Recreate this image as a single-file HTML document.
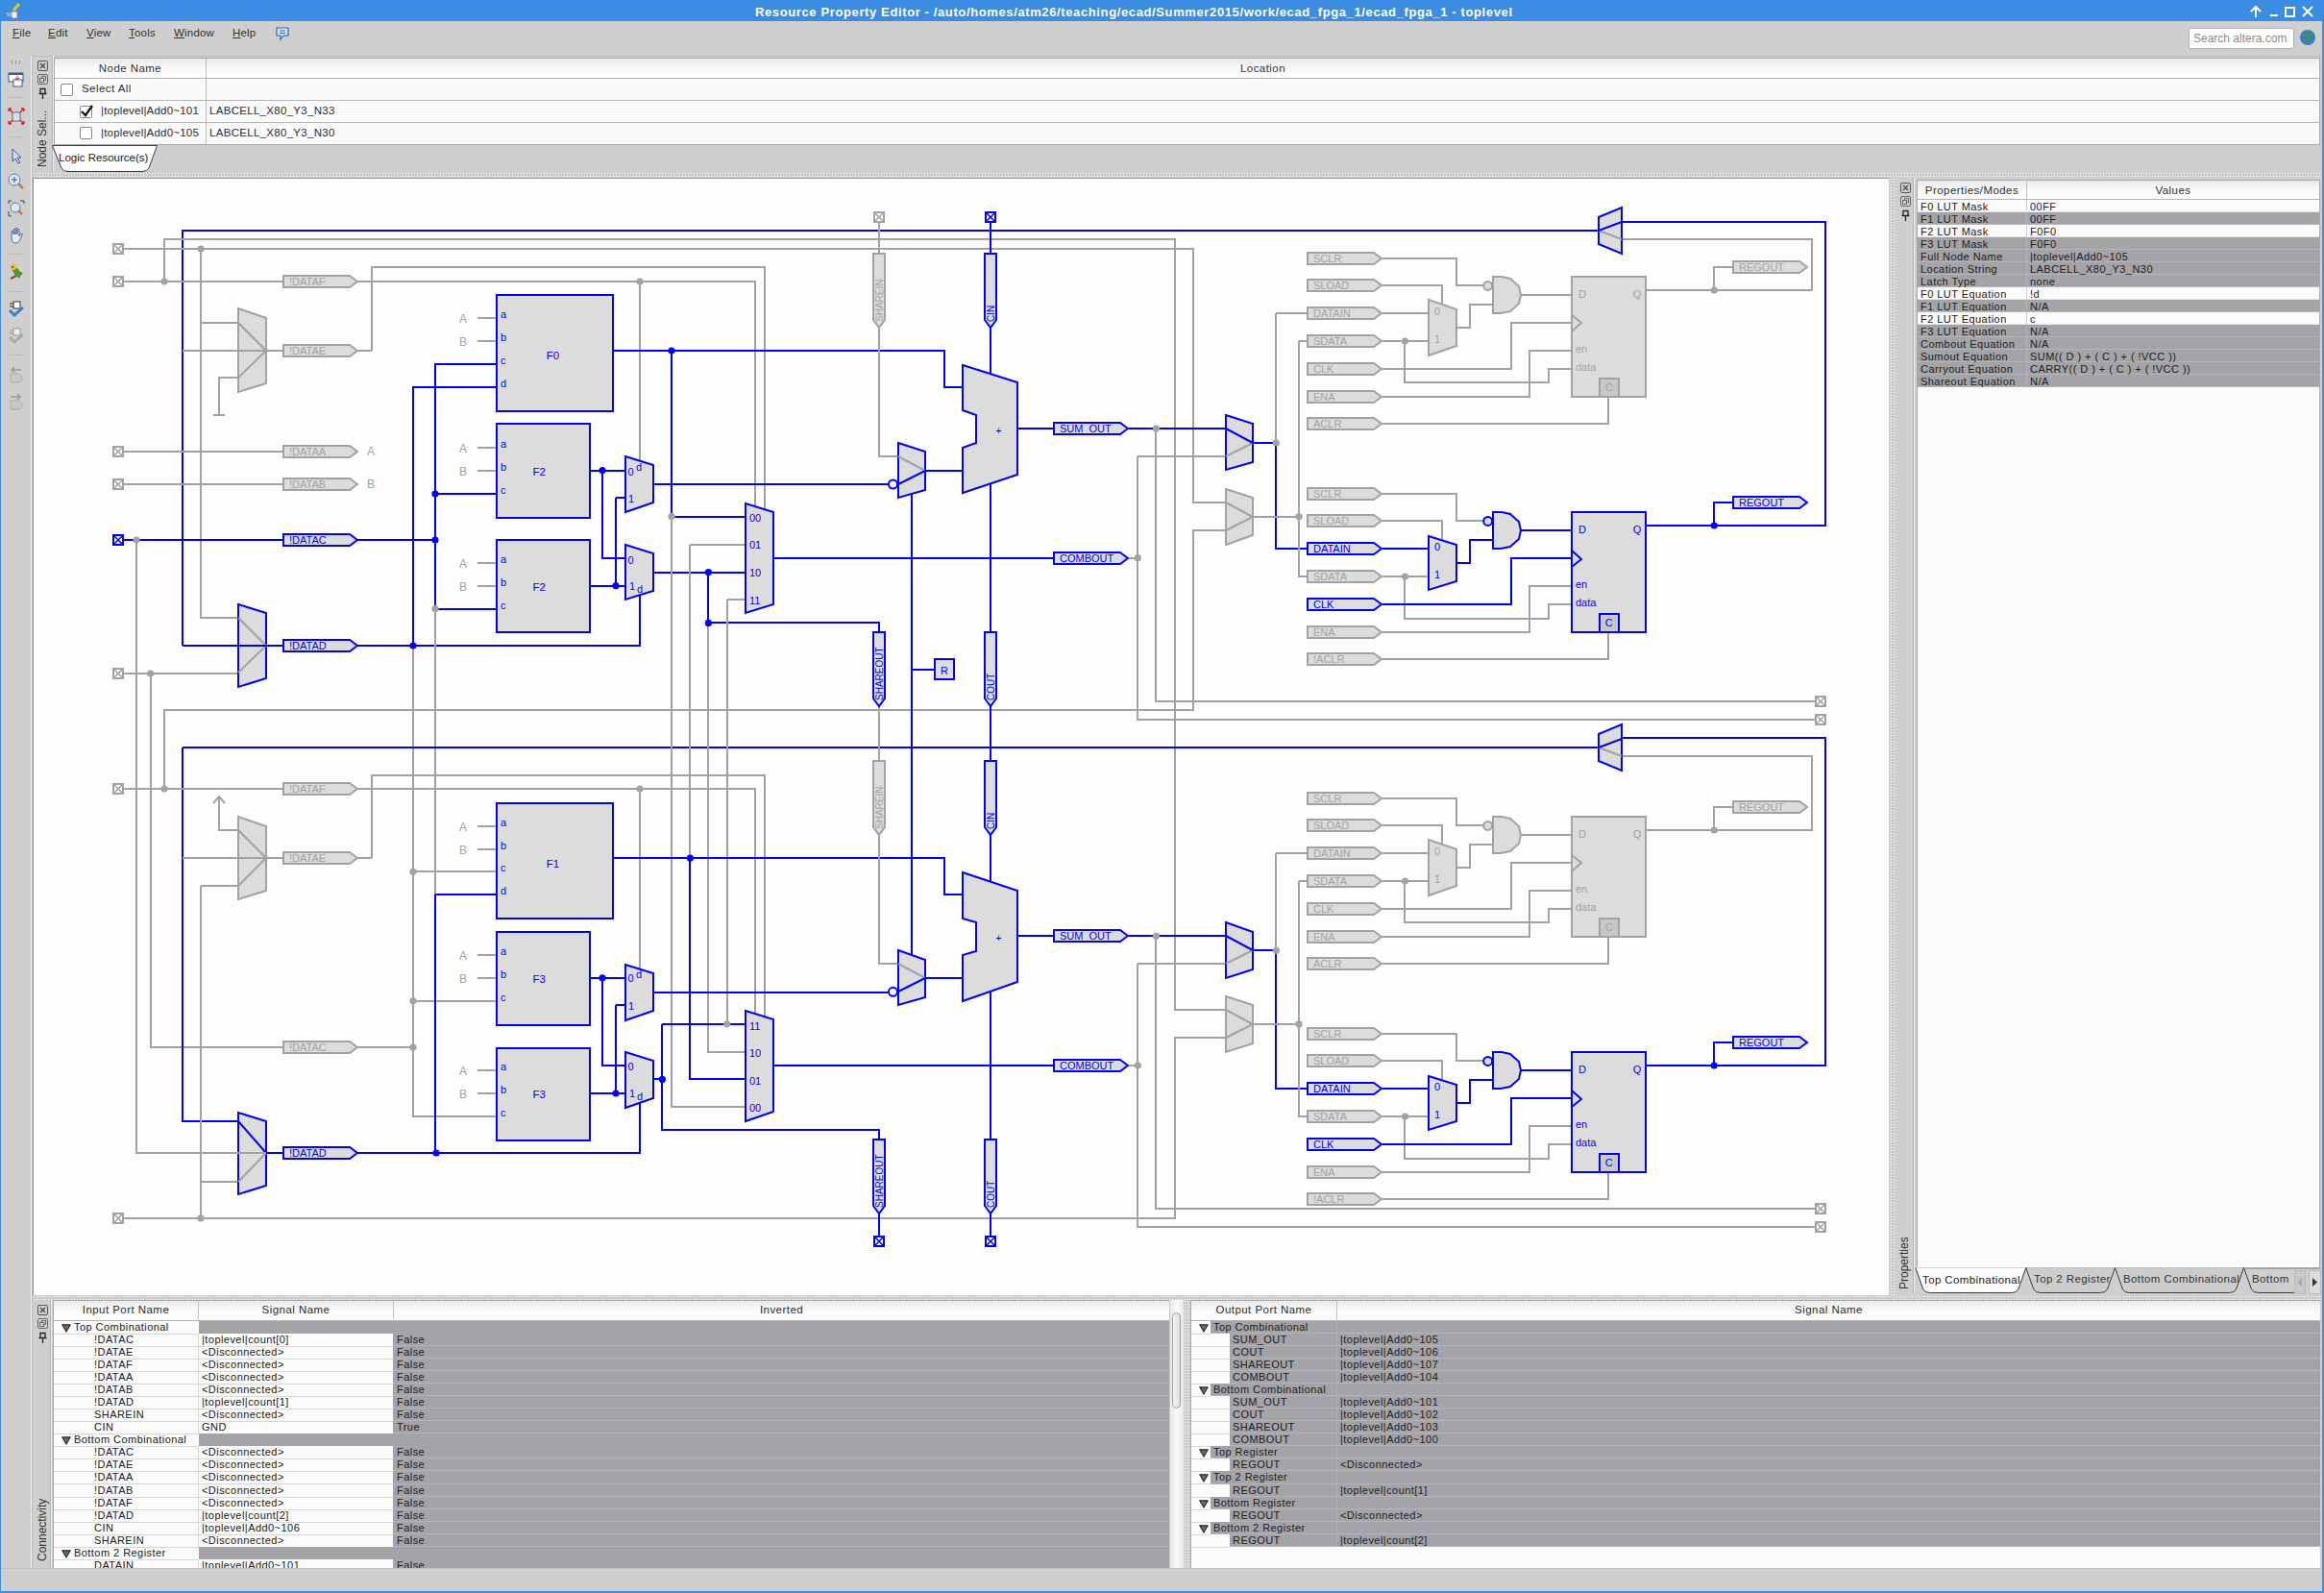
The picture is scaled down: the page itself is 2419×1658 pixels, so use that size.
<!DOCTYPE html><html><head><meta charset="utf-8"><style>
*{margin:0;padding:0;box-sizing:border-box}
html,body{width:2419px;height:1658px;overflow:hidden;background:#cfcfcf;font-family:"Liberation Sans",sans-serif;color:#2e2e2e}
.a{position:absolute}
svg text{font-family:"Liberation Sans",sans-serif;stroke:none}
svg .t{font-size:11px}
svg .tl{font-size:12px}
svg .tp{font-size:11px}
svg .tf{font-size:11.5px}
svg .tv{font-size:10px}
.menu span{position:absolute;top:28px;font-size:11.5px;color:#303030;letter-spacing:0.2px}
.hdr{background:linear-gradient(#e9e9e9,#f8f8f8 45%,#ffffff);}
.cell{position:absolute;font-size:11px;white-space:nowrap;overflow:hidden;letter-spacing:0.45px}
.vl{position:absolute;width:1px;background:#b8b8b8}
.hl{position:absolute;height:1px;background:#c0c0c0}
.gr{background:#a3a3a8}
.dots{background-color:#cdcdcd;background-image:radial-gradient(circle,#ffffff 0.7px,transparent 1px);background-size:3px 3px}
</style></head><body>
<div class="a" style="left:0;top:0;width:2419px;height:1658px;border:1px solid #3d8ee4;border-width:0 2px 2px 1px"></div>
<div class="a" style="left:0;top:0;width:2419px;height:22px;background:#3b8de3"></div>
<div class="a" style="left:786px;top:5px;width:800px;font-size:13px;font-weight:bold;color:#fff;white-space:nowrap;letter-spacing:0.62px">Resource Property Editor - /auto/homes/atm26/teaching/ecad/Summer2015/work/ecad_fpga_1/ecad_fpga_1 - toplevel</div>
<svg class="a" style="left:2340px;top:4px" width="75" height="16" viewBox="0 0 75 16"><g stroke="#fff" stroke-width="2" fill="none"><path d="M8,14V3M3,8L8,3L13,8"/><path d="M23,12H31"/><rect x="39" y="4" width="9" height="9"/><path d="M57,3L67,13M67,3L57,13"/></g></svg>
<svg class="a" style="left:4px;top:2px" width="18" height="18"><rect x="8" y="10" width="6" height="7" fill="#eee" stroke="#888"/><path d="M10,9L16,2" stroke="#f0c020" stroke-width="3"/><path d="M2,12H8M3,14H8" stroke="#ccc"/></svg>
<div class="menu">
<span style="left:13px"><u>F</u>ile</span>
<span style="left:50px"><u>E</u>dit</span>
<span style="left:90px"><u>V</u>iew</span>
<span style="left:134px"><u>T</u>ools</span>
<span style="left:181px"><u>W</u>indow</span>
<span style="left:242px"><u>H</u>elp</span>
</div>
<svg class="a" style="left:286px;top:27px" width="16" height="16"><path d="M2,2H14V10H9L6,14V10H2Z" fill="#dbe6f5" stroke="#3060b0" stroke-width="1.2"/><path d="M5,5H11M5,7.5H11" stroke="#3060b0"/></svg>
<div class="a" style="left:2278px;top:29px;width:110px;height:22px;background:#fff;border:1px solid #b0b0b0;border-radius:2px;font-size:12px;color:#8a8a8a;padding:3px 0 0 4px;white-space:nowrap">Search altera.com</div>
<svg class="a" style="left:2393px;top:30px" width="18" height="18"><circle cx="9" cy="9" r="8" fill="#3a7ad8"/><path d="M5,4Q9,6 8,10Q6,12 9,15M11,3Q14,6 12,9" stroke="#3c9a3c" stroke-width="3" fill="none"/></svg>
<div class="a" style="left:33px;top:58px;width:2384px;height:1px;background:#bababa"></div>
<div class="a" style="left:12px;top:63px;width:9px;height:4px;border-left:1px solid #999;border-right:1px solid #999"><div style="margin-left:3px;width:1px;height:4px;background:#999"></div></div>
<svg class="a" style="left:8px;top:74px" width="18" height="18"><rect x="1" y="2" width="15" height="9" fill="#fff" stroke="#3a5aa0"/><rect x="1" y="2" width="15" height="2" fill="#3a5aa0"/><rect x="6" y="9" width="9" height="7" fill="#fff" stroke="#3a5aa0"/><path d="M10,5V9M8,7L10,9L12,7" stroke="#d02020" fill="none"/></svg>
<div class="a" style="left:9px;top:101px;width:16px;height:1px;background:#bcbcbc"></div>
<svg class="a" style="left:8px;top:112px" width="18" height="18"><rect x="5" y="5" width="8" height="9" fill="#dde" stroke="#667"/><path d="M1,1L5,5M17,1L13,5M1,17L5,13M17,17L13,13M1,1H4M1,1V4M17,1H14M17,1V4M1,17H4M1,17V14M17,17H14M17,17V14" stroke="#e02020" stroke-width="1.3" fill="none"/></svg>
<div class="a" style="left:9px;top:142px;width:16px;height:1px;background:#bcbcbc"></div>
<svg class="a" style="left:8px;top:153px" width="18" height="18"><path d="M5,2L5,15L8,12L11,17L13,16L10,11L14,11Z" fill="#cfe0f5" stroke="#3a5a90"/></svg>
<svg class="a" style="left:8px;top:180px" width="18" height="18"><circle cx="7" cy="7" r="6" fill="#dfe9f7" stroke="#5a7ab0"/><path d="M4,7H10M7,4V10" stroke="#3050a0"/><path d="M11,11L16,16" stroke="#c08040" stroke-width="2.5"/></svg>
<svg class="a" style="left:8px;top:208px" width="18" height="18"><circle cx="8" cy="8" r="5" fill="#dfe9f7" stroke="#5a7ab0"/><path d="M11,11L15,15" stroke="#c08040" stroke-width="2.5"/><path d="M1,12V17H4M17,4V1H13M1,4V1H4" stroke="#304060" fill="none"/></svg>
<svg class="a" style="left:8px;top:236px" width="18" height="18"><path d="M4,9V5Q5,3 6,5V8V3Q7,1 8,3V8V2Q9,0 10,2V8V3Q11,1 12,3V10L14,7Q16,7 15,9L12,15Q11,17 8,17H7Q4,16 4,12Z" fill="#e8eef8" stroke="#4a68a8"/></svg>
<div class="a" style="left:9px;top:264px;width:16px;height:1px;background:#bcbcbc"></div>
<svg class="a" style="left:8px;top:274px" width="18" height="18"><path d="M3,16L15,10" stroke="#805030" stroke-width="2"/><path d="M6,4Q12,4 14,12L12,16Q7,12 5,8Z" fill="#4a9a30"/><circle cx="6" cy="4" r="3" fill="#f0c020"/><circle cx="5" cy="4" r="1" fill="#d02020"/></svg>
<div class="a" style="left:9px;top:303px;width:16px;height:1px;background:#bcbcbc"></div>
<svg class="a" style="left:8px;top:312px" width="18" height="18"><rect x="6" y="2" width="7" height="7" fill="#fff" stroke="#333"/><path d="M2,4H6M2,7H6" stroke="#333"/><path d="M2,11L7,16L16,8" stroke="#3a7ad8" stroke-width="3" fill="none"/></svg>
<svg class="a" style="left:8px;top:340px" width="18" height="18"><rect x="6" y="2" width="7" height="7" fill="#eee" stroke="#999"/><path d="M2,4H6M2,7H6" stroke="#999"/><path d="M2,11L7,16L16,8" stroke="#aaa" stroke-width="3" fill="none"/></svg>
<div class="a" style="left:9px;top:369px;width:16px;height:1px;background:#bcbcbc"></div>
<svg class="a" style="left:8px;top:381px" width="18" height="18"><path d="M3,8H9Q15,8 15,13Q15,17 9,17H3Z" fill="#c8c8c8" stroke="#aaa"/><path d="M14,4H4M7,1L4,4L7,7" stroke="#999" stroke-width="1.5" fill="none"/></svg>
<svg class="a" style="left:8px;top:409px" width="18" height="18"><path d="M3,8H9Q15,8 15,13Q15,17 9,17H3Z" fill="#c8c8c8" stroke="#aaa"/><path d="M3,4H13M10,1L13,4L10,7" stroke="#999" stroke-width="1.5" fill="none"/></svg>
<div class="a" style="left:32px;top:58px;width:2px;height:1574px;background:#bcbcbc;border-left:1px solid #f4f4f4"></div>
<svg class="a" style="left:38px;top:62px" width="13" height="44"><g fill="none" stroke="#555"><rect x="1.5" y="1.5" width="10" height="10" rx="1.5"/><path d="M4,4L9,9M9,4L4,9" stroke-width="1.6"/><rect x="1.5" y="15.5" width="10" height="10" rx="1.5" stroke="#6a6a6a"/><rect x="3.5" y="19.5" width="4" height="4" stroke="#6a6a6a"/><path d="M5.5,19.5V17.5H9.5V21.5H7.5" stroke="#6a6a6a"/><path d="M4,30.5H9V35.5H4ZM6.5,35.5V41M2.5,35.5H10.5" stroke="#222" stroke-width="1.3"/></g></svg>
<div class="a" style="left:35px;top:114px;width:18px;height:60px;"><div style="position:absolute;left:0;top:60px;transform:rotate(-90deg);transform-origin:0 0;font-size:12px;white-space:nowrap;color:#333;width:60px;line-height:18px">Node Sel...</div></div>
<div class="a" style="left:54px;top:58px;width:2px;height:122px;background:#b4b4b4;border-right:1px solid #eee"></div>
<div class="a" style="left:56px;top:60px;width:2359px;height:91px;background:#fafafa;border:1px solid #a8a8a8"></div>
<div class="a hdr" style="left:57px;top:61px;width:2357px;height:21px;border-bottom:1px solid #b4b4b4"></div>
<div class="cell" style="left:57px;top:65px;width:157px;text-align:center;font-size:11.5px;color:#333">Node Name</div>
<div class="cell" style="left:215px;top:65px;width:2199px;text-align:center;font-size:11.5px;color:#333">Location</div>
<div class="vl" style="left:214px;top:61px;height:89px;background:#b8b8b8"></div>
<div class="hl" style="left:57px;top:104px;width:2357px;background:#b8b8b8"></div>
<div class="hl" style="left:57px;top:127px;width:2357px;background:#b8b8b8"></div>
<div class="a" style="left:63px;top:87px;width:13px;height:13px;background:#fff;border:1px solid #888;border-radius:2px"></div>
<div class="a" style="left:83px;top:110px;width:13px;height:13px;background:#fff;border:1px solid #888;border-radius:2px"></div>
<svg class="a" style="left:83px;top:108px" width="15" height="15"><path d="M2,8L6,12L13,2" stroke="#111" stroke-width="2.2" fill="none"/></svg>
<div class="a" style="left:83px;top:132px;width:13px;height:13px;background:#fff;border:1px solid #888;border-radius:2px"></div>
<div class="cell" style="left:85px;top:86px;font-size:11.5px">Select All</div>
<div class="cell" style="left:105px;top:109px;font-size:11.5px;letter-spacing:0.2px">|toplevel|Add0~101</div>
<div class="cell" style="left:105px;top:132px;font-size:11.5px;letter-spacing:0.2px">|toplevel|Add0~105</div>
<div class="cell" style="left:218px;top:109px;font-size:11.5px;letter-spacing:0.3px">LABCELL_X80_Y3_N33</div>
<div class="cell" style="left:218px;top:132px;font-size:11.5px;letter-spacing:0.3px">LABCELL_X80_Y3_N30</div>
<svg class="a" style="left:54px;top:151px" width="115" height="30"><path d="M0.5,0.5H109.5L101,24Q99,27.5 94,27.5H16Q12,27.5 10,24Z" fill="#fbfbfb" stroke="#404040" stroke-width="1"/></svg>
<div class="cell" style="left:61px;top:158px;font-size:11.5px;color:#222;letter-spacing:0">Logic Resource(s)</div>
<div class="a dots" style="left:34px;top:179px;width:2383px;height:5px"></div>
<div class="a" style="left:34px;top:185px;width:1932px;height:1163px;background:#fefefe;border-left:1px solid #9a9a9a;border-top:1px solid #9a9a9a"></div>
<svg width="2419" height="1658" viewBox="0 0 2419 1658" style="position:absolute;left:0;top:0" stroke-width="2">
<polyline points="190,672 190,240 1664,240" stroke="#0000ff" fill="none"/>
<polyline points="171,293 171,249 1223,249 1223,1051 1275,1051" stroke="#a2a2a2" fill="none"/>
<polyline points="123,259 1242,259 1242,523 1275,523" stroke="#a2a2a2" fill="none"/>
<polyline points="209,259 209,643 248,643" stroke="#a2a2a2" fill="none"/>
<polyline points="209,336 248,336" stroke="#a2a2a2" fill="none"/>
<polyline points="123,293 296,293" stroke="#a2a2a2" fill="none"/>
<polyline points="372,293 786,293 786,527" stroke="#a2a2a2" fill="none"/>
<polyline points="666,293 666,479" stroke="#a2a2a2" fill="none"/>
<polyline points="387,365 387,278 796,278 796,530" stroke="#a2a2a2" fill="none"/>
<polyline points="190,365 296,365" stroke="#a2a2a2" fill="none"/>
<polyline points="248,393 228,393 228,432" stroke="#a2a2a2" fill="none"/>
<polyline points="222,432 234,432" stroke="#a2a2a2" fill="none"/>
<polygon points="248,321 277,331 277,399 248,408" fill="#dcdcdc" stroke="#a2a2a2"/>
<polyline points="248,336 277,365 248,393" stroke="#a2a2a2" fill="none"/>
<polyline points="190,365 296,365" stroke="#a2a2a2" fill="none"/>
<polyline points="372,365 387,365" stroke="#a2a2a2" fill="none"/>
<polyline points="123,470 296,470" stroke="#a2a2a2" fill="none"/>
<polyline points="123,504 296,504" stroke="#a2a2a2" fill="none"/>
<polyline points="123,562 296,562" stroke="#0000ff" fill="none"/>
<polyline points="372,562 453,562" stroke="#0000ff" fill="none"/>
<polyline points="142,562 142,1200 248,1200" stroke="#a2a2a2" fill="none"/>
<polyline points="209,643 248,643" stroke="#a2a2a2" fill="none"/>
<polyline points="123,701 248,701" stroke="#a2a2a2" fill="none"/>
<polyline points="157,701 157,1090 296,1090" stroke="#a2a2a2" fill="none"/>
<polygon points="248,629 277,638 277,706 248,715" fill="#dcdcdc" stroke="#0000ff"/>
<polyline points="248,643 277,672 248,700" stroke="#a2a2a2" fill="none"/>
<polyline points="190,672 296,672" stroke="#0000ff" fill="none"/>
<polyline points="372,672 640,672 666,672 666,620" stroke="#0000ff" fill="none"/>
<polyline points="516,379 453,379 453,634 516,634" stroke="#0000ff" fill="none"/>
<polyline points="453,514 516,514" stroke="#0000ff" fill="none"/>
<polyline points="516,403 430,403 430,672" stroke="#0000ff" fill="none"/>
<polyline points="453,634 453,931" stroke="#a2a2a2" fill="none"/>
<polyline points="453,931 516,931" stroke="#0000ff" fill="none"/>
<polyline points="430,672 430,1162 516,1162" stroke="#a2a2a2" fill="none"/>
<polyline points="430,907 516,907" stroke="#a2a2a2" fill="none"/>
<polyline points="430,1042 516,1042" stroke="#a2a2a2" fill="none"/>
<polyline points="372,1090 430,1090" stroke="#a2a2a2" fill="none"/>
<polyline points="453,931 453,1200" stroke="#0000ff" fill="none"/>
<polyline points="190,778 1664,778" stroke="#0000ff" fill="none"/>
<polyline points="190,778 190,1167 248,1167" stroke="#0000ff" fill="none"/>
<polyline points="171,821 171,739 1242,739 1242,552 1275,552" stroke="#a2a2a2" fill="none"/>
<polyline points="123,821 296,821" stroke="#a2a2a2" fill="none"/>
<polyline points="372,821 786,821 786,1055" stroke="#a2a2a2" fill="none"/>
<polyline points="666,821 666,1008" stroke="#a2a2a2" fill="none"/>
<polyline points="387,893 387,807 796,807 796,1058" stroke="#a2a2a2" fill="none"/>
<polyline points="190,893 296,893" stroke="#a2a2a2" fill="none"/>
<polyline points="372,893 387,893" stroke="#a2a2a2" fill="none"/>
<polyline points="228,829 228,864 248,864" stroke="#a2a2a2" fill="none"/>
<polyline points="222,836 228,829 234,836" stroke="#a2a2a2" fill="none"/>
<polygon points="248,850 277,860 277,927 248,936" fill="#dcdcdc" stroke="#a2a2a2"/>
<polyline points="248,864 277,893 248,922" stroke="#a2a2a2" fill="none"/>
<polyline points="190,893 296,893" stroke="#a2a2a2" fill="none"/>
<polyline points="209,922 248,922" stroke="#a2a2a2" fill="none"/>
<polyline points="209,922 209,1268" stroke="#a2a2a2" fill="none"/>
<polyline points="209,1230 248,1230" stroke="#a2a2a2" fill="none"/>
<polyline points="123,1268 1223,1268 1223,1080 1275,1080" stroke="#a2a2a2" fill="none"/>
<polygon points="248,1158 277,1167 277,1234 248,1243" fill="#dcdcdc" stroke="#0000ff"/>
<polyline points="248,1167 277,1200" stroke="#0000ff" fill="none"/>
<polyline points="248,1230 277,1200" stroke="#a2a2a2" fill="none"/>
<polyline points="142,1200 277,1200" stroke="#a2a2a2" fill="none"/>
<polyline points="277,1200 296,1200" stroke="#0000ff" fill="none"/>
<polyline points="372,1200 666,1200 666,1148" stroke="#0000ff" fill="none"/>
<g stroke="#a2a2a2" fill="#fff"><rect x="118" y="254" width="10" height="10"/><path d="M118,254L128,264M128,254L118,264" stroke-width="1.5"/></g>
<g stroke="#a2a2a2" fill="#fff"><rect x="118" y="288" width="10" height="10"/><path d="M118,288L128,298M128,288L118,298" stroke-width="1.5"/></g>
<g stroke="#a2a2a2" fill="#fff"><rect x="118" y="465" width="10" height="10"/><path d="M118,465L128,475M128,465L118,475" stroke-width="1.5"/></g>
<g stroke="#a2a2a2" fill="#fff"><rect x="118" y="499" width="10" height="10"/><path d="M118,499L128,509M128,499L118,509" stroke-width="1.5"/></g>
<g stroke="#a2a2a2" fill="#fff"><rect x="118" y="696" width="10" height="10"/><path d="M118,696L128,706M128,696L118,706" stroke-width="1.5"/></g>
<g stroke="#a2a2a2" fill="#fff"><rect x="118" y="816" width="10" height="10"/><path d="M118,816L128,826M128,816L118,826" stroke-width="1.5"/></g>
<g stroke="#a2a2a2" fill="#fff"><rect x="118" y="1263" width="10" height="10"/><path d="M118,1263L128,1273M128,1263L118,1273" stroke-width="1.5"/></g>
<g stroke="#0000ff" fill="#fff"><rect x="118" y="557" width="10" height="10"/><path d="M118,557L128,567M128,557L118,567" stroke-width="1.5"/></g>
<polygon points="295,287 364,287 372,293 364,299 295,299" fill="#dcdcdc" stroke="#a2a2a2"/>
<text x="301" y="297.3" fill="#a2a2a2" class="t">!DATAF</text>
<polygon points="295,359 364,359 372,365 364,371 295,371" fill="#dcdcdc" stroke="#a2a2a2"/>
<text x="301" y="369.3" fill="#a2a2a2" class="t">!DATAE</text>
<polygon points="295,464 364,464 372,470 364,476 295,476" fill="#dcdcdc" stroke="#a2a2a2"/>
<text x="301" y="474.3" fill="#a2a2a2" class="t">!DATAA</text>
<polygon points="295,498 364,498 372,504 364,510 295,510" fill="#dcdcdc" stroke="#a2a2a2"/>
<text x="301" y="508.3" fill="#a2a2a2" class="t">!DATAB</text>
<polygon points="295,556 364,556 372,562 364,568 295,568" fill="#dcdcdc" stroke="#0000ff"/>
<text x="301" y="566.3" fill="#0000ff" class="t">!DATAC</text>
<polygon points="295,666 364,666 372,672 364,678 295,678" fill="#dcdcdc" stroke="#0000ff"/>
<text x="301" y="676.3" fill="#0000ff" class="t">!DATAD</text>
<polygon points="295,815 364,815 372,821 364,827 295,827" fill="#dcdcdc" stroke="#a2a2a2"/>
<text x="301" y="825.3" fill="#a2a2a2" class="t">!DATAF</text>
<polygon points="295,887 364,887 372,893 364,899 295,899" fill="#dcdcdc" stroke="#a2a2a2"/>
<text x="301" y="897.3" fill="#a2a2a2" class="t">!DATAE</text>
<polygon points="295,1084 364,1084 372,1090 364,1096 295,1096" fill="#dcdcdc" stroke="#a2a2a2"/>
<text x="301" y="1094.3" fill="#a2a2a2" class="t">!DATAC</text>
<polygon points="295,1194 364,1194 372,1200 364,1206 295,1206" fill="#dcdcdc" stroke="#0000ff"/>
<text x="301" y="1204.3" fill="#0000ff" class="t">!DATAD</text>
<text x="382" y="474" fill="#a2a2a2" class="tl">A</text>
<text x="382" y="508" fill="#a2a2a2" class="tl">B</text>
<rect x="517" y="307" width="121" height="121" fill="#dcdcdc" stroke="#0000ff"/>
<text x="521" y="331" fill="#0000ff" class="tp">a</text>
<text x="521" y="355" fill="#0000ff" class="tp">b</text>
<text x="521" y="379" fill="#0000ff" class="tp">c</text>
<text x="521" y="403" fill="#0000ff" class="tp">d</text>
<text x="575.5" y="374.0" fill="#0000ff" class="tf" text-anchor="middle">F0</text>
<polyline points="497,331 516,331" stroke="#a2a2a2" fill="none"/>
<text x="482" y="336" fill="#a2a2a2" class="tl" text-anchor="middle">A</text>
<polyline points="497,355 516,355" stroke="#a2a2a2" fill="none"/>
<text x="482" y="360" fill="#a2a2a2" class="tl" text-anchor="middle">B</text>
<rect x="517" y="441" width="97" height="98" fill="#dcdcdc" stroke="#0000ff"/>
<text x="521" y="465.6" fill="#0000ff" class="tp">a</text>
<text x="521" y="489.7" fill="#0000ff" class="tp">b</text>
<text x="521" y="514" fill="#0000ff" class="tp">c</text>
<text x="561.0999999999999" y="494.5" fill="#0000ff" class="tf" text-anchor="middle">F2</text>
<polyline points="497,466 516,466" stroke="#a2a2a2" fill="none"/>
<text x="482" y="470.6" fill="#a2a2a2" class="tl" text-anchor="middle">A</text>
<polyline points="497,490 516,490" stroke="#a2a2a2" fill="none"/>
<text x="482" y="494.7" fill="#a2a2a2" class="tl" text-anchor="middle">B</text>
<rect x="517" y="562" width="97" height="96" fill="#dcdcdc" stroke="#0000ff"/>
<text x="521" y="586" fill="#0000ff" class="tp">a</text>
<text x="521" y="610" fill="#0000ff" class="tp">b</text>
<text x="521" y="633.5" fill="#0000ff" class="tp">c</text>
<text x="561.0999999999999" y="614.7" fill="#0000ff" class="tf" text-anchor="middle">F2</text>
<polyline points="497,586 516,586" stroke="#a2a2a2" fill="none"/>
<text x="482" y="591" fill="#a2a2a2" class="tl" text-anchor="middle">A</text>
<polyline points="497,610 516,610" stroke="#a2a2a2" fill="none"/>
<text x="482" y="615" fill="#a2a2a2" class="tl" text-anchor="middle">B</text>
<rect x="517" y="836" width="121" height="120" fill="#dcdcdc" stroke="#0000ff"/>
<text x="521" y="859.7" fill="#0000ff" class="tp">a</text>
<text x="521" y="883.5" fill="#0000ff" class="tp">b</text>
<text x="521" y="907.3" fill="#0000ff" class="tp">c</text>
<text x="521" y="931.2" fill="#0000ff" class="tp">d</text>
<text x="575.5" y="902.7" fill="#0000ff" class="tf" text-anchor="middle">F1</text>
<polyline points="497,860 516,860" stroke="#a2a2a2" fill="none"/>
<text x="482" y="864.7" fill="#a2a2a2" class="tl" text-anchor="middle">A</text>
<polyline points="497,884 516,884" stroke="#a2a2a2" fill="none"/>
<text x="482" y="888.5" fill="#a2a2a2" class="tl" text-anchor="middle">B</text>
<rect x="517" y="970" width="97" height="97" fill="#dcdcdc" stroke="#0000ff"/>
<text x="521" y="993.7" fill="#0000ff" class="tp">a</text>
<text x="521" y="1017.8" fill="#0000ff" class="tp">b</text>
<text x="521" y="1041.8" fill="#0000ff" class="tp">c</text>
<text x="561.0999999999999" y="1022.9" fill="#0000ff" class="tf" text-anchor="middle">F3</text>
<polyline points="497,994 516,994" stroke="#a2a2a2" fill="none"/>
<text x="482" y="998.7" fill="#a2a2a2" class="tl" text-anchor="middle">A</text>
<polyline points="497,1018 516,1018" stroke="#a2a2a2" fill="none"/>
<text x="482" y="1022.8" fill="#a2a2a2" class="tl" text-anchor="middle">B</text>
<rect x="517" y="1091" width="97" height="96" fill="#dcdcdc" stroke="#0000ff"/>
<text x="521" y="1114" fill="#0000ff" class="tp">a</text>
<text x="521" y="1138" fill="#0000ff" class="tp">b</text>
<text x="521" y="1161.7" fill="#0000ff" class="tp">c</text>
<text x="561.0999999999999" y="1143.25" fill="#0000ff" class="tf" text-anchor="middle">F3</text>
<polyline points="497,1114 516,1114" stroke="#a2a2a2" fill="none"/>
<text x="482" y="1119" fill="#a2a2a2" class="tl" text-anchor="middle">A</text>
<polyline points="497,1138 516,1138" stroke="#a2a2a2" fill="none"/>
<text x="482" y="1143" fill="#a2a2a2" class="tl" text-anchor="middle">B</text>
<polyline points="614,490 651,490" stroke="#0000ff" fill="none"/>
<polyline points="627,490 627,581 651,581" stroke="#0000ff" fill="none"/>
<polyline points="641,518 651,518" stroke="#0000ff" fill="none"/>
<polyline points="641,518 641,610" stroke="#0000ff" fill="none"/>
<polyline points="614,610 651,610" stroke="#0000ff" fill="none"/>
<polygon points="651,475 680,484 680,523 651,533" fill="#dcdcdc" stroke="#0000ff"/>
<polygon points="651,567 680,576 680,615 651,624" fill="#dcdcdc" stroke="#0000ff"/>
<text x="653.5" y="495" fill="#0000ff" class="tp">0</text>
<text x="662" y="490" fill="#0000ff" class="tp">d</text>
<text x="654" y="523" fill="#0000ff" class="tp">1</text>
<text x="653.5" y="587" fill="#0000ff" class="tp">0</text>
<text x="655" y="614" fill="#0000ff" class="tp">1</text>
<text x="663" y="617" fill="#0000ff" class="tp">d</text>
<polyline points="680,504 925,504" stroke="#0000ff" fill="none"/>
<polyline points="680,596 776,596" stroke="#0000ff" fill="none"/>
<polyline points="737,596 737,648 915,648 915,658" stroke="#0000ff" fill="none"/>
<polyline points="737,648 737,1095 776,1095" stroke="#a2a2a2" fill="none"/>
<polyline points="638,365 983,365 983,403 1002,403" stroke="#0000ff" fill="none"/>
<polyline points="699,365 699,538 776,538" stroke="#0000ff" fill="none"/>
<polyline points="699,538 699,1152 776,1152" stroke="#a2a2a2" fill="none"/>
<polyline points="718,567 776,567" stroke="#a2a2a2" fill="none"/>
<polyline points="718,567 718,893" stroke="#a2a2a2" fill="none"/>
<polyline points="757,624 776,624" stroke="#a2a2a2" fill="none"/>
<polyline points="757,624 757,1066" stroke="#a2a2a2" fill="none"/>
<polyline points="614,1018 651,1018" stroke="#0000ff" fill="none"/>
<polyline points="627,1018 627,1109 651,1109" stroke="#0000ff" fill="none"/>
<polyline points="641,1046 651,1046" stroke="#0000ff" fill="none"/>
<polyline points="641,1046 641,1138" stroke="#0000ff" fill="none"/>
<polyline points="614,1138 651,1138" stroke="#0000ff" fill="none"/>
<polygon points="651,1004 680,1013 680,1052 651,1062" fill="#dcdcdc" stroke="#0000ff"/>
<polygon points="651,1095 680,1104 680,1143 651,1153" fill="#dcdcdc" stroke="#0000ff"/>
<text x="653.5" y="1022" fill="#0000ff" class="tp">0</text>
<text x="662" y="1018" fill="#0000ff" class="tp">d</text>
<text x="654" y="1051" fill="#0000ff" class="tp">1</text>
<text x="653.5" y="1114" fill="#0000ff" class="tp">0</text>
<text x="655" y="1142" fill="#0000ff" class="tp">1</text>
<text x="663" y="1145" fill="#0000ff" class="tp">d</text>
<polyline points="680,1033 925,1033" stroke="#0000ff" fill="none"/>
<polyline points="680,1123 689,1123" stroke="#0000ff" fill="none"/>
<polyline points="689,1066 689,1176 915,1176 915,1186" stroke="#0000ff" fill="none"/>
<polyline points="689,1066 776,1066" stroke="#0000ff" fill="none"/>
<polyline points="638,893 983,893 983,931 1002,931" stroke="#0000ff" fill="none"/>
<polyline points="718,893 718,1123 776,1123" stroke="#0000ff" fill="none"/>
<polygon points="776,524 805,533 805,629 776,638" fill="#dcdcdc" stroke="#0000ff"/>
<text x="780" y="543" fill="#0000ff" class="tp">00</text>
<text x="780" y="571" fill="#0000ff" class="tp">01</text>
<text x="780" y="600" fill="#0000ff" class="tp">10</text>
<text x="780" y="629" fill="#0000ff" class="tp">11</text>
<polygon points="776,1052 805,1061 805,1157 776,1167" fill="#dcdcdc" stroke="#0000ff"/>
<text x="780" y="1072" fill="#0000ff" class="tp">11</text>
<text x="780" y="1100" fill="#0000ff" class="tp">10</text>
<text x="780" y="1129" fill="#0000ff" class="tp">01</text>
<text x="780" y="1157" fill="#0000ff" class="tp">00</text>
<polyline points="805,581 1098,581" stroke="#0000ff" fill="none"/>
<polyline points="805,1109 1098,1109" stroke="#0000ff" fill="none"/>
<polyline points="915,341 915,475 935,475" stroke="#a2a2a2" fill="none"/>
<polygon points="935,461 963,470 963,510 935,518" fill="#dcdcdc" stroke="#0000ff"/>
<polyline points="935,475 963,490" stroke="#a2a2a2" fill="none"/>
<polyline points="935,504 963,490" stroke="#0000ff" fill="none"/>
<circle cx="929.5" cy="504" r="4.5" fill="#fff" stroke="#0000ff"/>
<polyline points="963,490 1002,490" stroke="#0000ff" fill="none"/>
<polygon points="1002,380 1059,398 1059,494 1002,513 1002,466 1016,461 1016,432 1002,427" fill="#dcdcdc" stroke="#0000ff"/>
<text x="1039.5" y="452" fill="#0000ff" class="tp" text-anchor="middle">+</text>
<polyline points="1059,446 1098,446" stroke="#0000ff" fill="none"/>
<polyline points="1175,446 1276,446" stroke="#0000ff" fill="none"/>
<polyline points="915,869 915,1003 935,1003" stroke="#a2a2a2" fill="none"/>
<polygon points="935,989 963,999 963,1038 935,1046" fill="#dcdcdc" stroke="#0000ff"/>
<polyline points="935,1003 963,1018" stroke="#a2a2a2" fill="none"/>
<polyline points="935,1032 963,1018" stroke="#0000ff" fill="none"/>
<circle cx="929.5" cy="1032.3" r="4.5" fill="#fff" stroke="#0000ff"/>
<polyline points="963,1018 1002,1018" stroke="#0000ff" fill="none"/>
<polygon points="1002,908 1059,927 1059,1022 1002,1042 1002,994 1016,990 1016,960 1002,956" fill="#dcdcdc" stroke="#0000ff"/>
<text x="1039.5" y="980.3" fill="#0000ff" class="tp" text-anchor="middle">+</text>
<polyline points="1059,974 1098,974" stroke="#0000ff" fill="none"/>
<polyline points="1175,974 1276,974" stroke="#0000ff" fill="none"/>
<polyline points="915,734 915,792" stroke="#a2a2a2" fill="none"/>
<polyline points="949,514 949,994" stroke="#0000ff" fill="none"/>
<polyline points="949,697 973,697" stroke="#0000ff" fill="none"/>
<rect x="973" y="686" width="20" height="21" fill="#dcdcdc" stroke="#0000ff"/>
<text x="983" y="701.5" fill="#0000ff" class="tp" text-anchor="middle">R</text>
<polyline points="1031,226 1031,264" stroke="#0000ff" fill="none"/>
<polyline points="1031,341 1031,390" stroke="#0000ff" fill="none"/>
<polyline points="1031,503 1031,658" stroke="#0000ff" fill="none"/>
<polyline points="1031,734 1031,792" stroke="#0000ff" fill="none"/>
<polyline points="1031,868 1031,918" stroke="#0000ff" fill="none"/>
<polyline points="1031,1031 1031,1186" stroke="#0000ff" fill="none"/>
<polyline points="1031,1262 1031,1292" stroke="#0000ff" fill="none"/>
<polyline points="915,226 915,264" stroke="#a2a2a2" fill="none"/>
<polyline points="915,1262 915,1292" stroke="#0000ff" fill="none"/>
<g stroke="#a2a2a2" fill="#fff"><rect x="910" y="221" width="10" height="10"/><path d="M910,221L920,231M920,221L910,231" stroke-width="1.5"/></g>
<g stroke="#0000ff" fill="#fff"><rect x="1026" y="221" width="10" height="10"/><path d="M1026,221L1036,231M1036,221L1026,231" stroke-width="1.5"/></g>
<g stroke="#0000ff" fill="#fff"><rect x="910" y="1287" width="10" height="10"/><path d="M910,1287L920,1297M920,1287L910,1297" stroke-width="1.5"/></g>
<g stroke="#0000ff" fill="#fff"><rect x="1026" y="1287" width="10" height="10"/><path d="M1026,1287L1036,1297M1036,1287L1026,1297" stroke-width="1.5"/></g>
<polygon points="909,264 921,264 921,333 915,341 909,333" fill="#dcdcdc" stroke="#a2a2a2"/>
<text transform="translate(919.3,335) rotate(-90)" fill="#a2a2a2" class="tv">SHAREIN</text>
<polygon points="1025,264 1037,264 1037,333 1031,341 1025,333" fill="#dcdcdc" stroke="#0000ff"/>
<text transform="translate(1035.3,335) rotate(-90)" fill="#0000ff" class="tv">CIN</text>
<polygon points="909,658 921,658 921,727 915,735 909,727" fill="#dcdcdc" stroke="#0000ff"/>
<text transform="translate(919.3,729) rotate(-90)" fill="#0000ff" class="tv">SHAREOUT</text>
<polygon points="1025,658 1037,658 1037,727 1031,735 1025,727" fill="#dcdcdc" stroke="#0000ff"/>
<text transform="translate(1035.3,729) rotate(-90)" fill="#0000ff" class="tv">COUT</text>
<polygon points="909,792 921,792 921,861 915,869 909,861" fill="#dcdcdc" stroke="#a2a2a2"/>
<text transform="translate(919.3,863) rotate(-90)" fill="#a2a2a2" class="tv">SHAREIN</text>
<polygon points="1025,792 1037,792 1037,861 1031,869 1025,861" fill="#dcdcdc" stroke="#0000ff"/>
<text transform="translate(1035.3,863) rotate(-90)" fill="#0000ff" class="tv">CIN</text>
<polygon points="909,1186 921,1186 921,1255 915,1263 909,1255" fill="#dcdcdc" stroke="#0000ff"/>
<text transform="translate(919.3,1257) rotate(-90)" fill="#0000ff" class="tv">SHAREOUT</text>
<polygon points="1025,1186 1037,1186 1037,1255 1031,1263 1025,1255" fill="#dcdcdc" stroke="#0000ff"/>
<text transform="translate(1035.3,1257) rotate(-90)" fill="#0000ff" class="tv">COUT</text>
<polygon points="1097,440 1166,440 1174,446 1166,452 1097,452" fill="#dcdcdc" stroke="#0000ff"/>
<text x="1103" y="450.3" fill="#0000ff" class="t">SUM_OUT</text>
<polygon points="1097,575 1166,575 1174,581 1166,587 1097,587" fill="#dcdcdc" stroke="#0000ff"/>
<text x="1103" y="585.3" fill="#0000ff" class="t">COMBOUT</text>
<polygon points="1097,968 1166,968 1174,974 1166,980 1097,980" fill="#dcdcdc" stroke="#0000ff"/>
<text x="1103" y="978.3" fill="#0000ff" class="t">SUM_OUT</text>
<polygon points="1097,1103 1166,1103 1174,1109 1166,1115 1097,1115" fill="#dcdcdc" stroke="#0000ff"/>
<text x="1103" y="1113.3" fill="#0000ff" class="t">COMBOUT</text>
<polyline points="1184,475 1276,475" stroke="#a2a2a2" fill="none"/>
<polyline points="1184,475 1184,749 1895,749" stroke="#a2a2a2" fill="none"/>
<polyline points="1175,581 1184,581" stroke="#a2a2a2" fill="none"/>
<polyline points="1203,446 1203,730 1895,730" stroke="#a2a2a2" fill="none"/>
<polyline points="1184,1003 1276,1003" stroke="#a2a2a2" fill="none"/>
<polyline points="1184,1003 1184,1277 1895,1277" stroke="#a2a2a2" fill="none"/>
<polyline points="1175,1109 1184,1109" stroke="#a2a2a2" fill="none"/>
<polyline points="1203,974 1203,1258 1895,1258" stroke="#a2a2a2" fill="none"/>
<g stroke="#a2a2a2" fill="#fff"><rect x="1890" y="725" width="10" height="10"/><path d="M1890,725L1900,735M1900,725L1890,735" stroke-width="1.5"/></g>
<g stroke="#a2a2a2" fill="#fff"><rect x="1890" y="744" width="10" height="10"/><path d="M1890,744L1900,754M1900,744L1890,754" stroke-width="1.5"/></g>
<g stroke="#a2a2a2" fill="#fff"><rect x="1890" y="1253" width="10" height="10"/><path d="M1890,1253L1900,1263M1900,1253L1890,1263" stroke-width="1.5"/></g>
<g stroke="#a2a2a2" fill="#fff"><rect x="1890" y="1272" width="10" height="10"/><path d="M1890,1272L1900,1282M1900,1272L1890,1282" stroke-width="1.5"/></g>
<polygon points="1276,432 1304,441 1304,481 1276,489" fill="#dcdcdc" stroke="#0000ff"/>
<polyline points="1276,475 1304,461" stroke="#a2a2a2" fill="none"/>
<polyline points="1276,446 1304,461" stroke="#0000ff" fill="none"/>
<polyline points="1304,461 1328,461" stroke="#0000ff" fill="none"/>
<polyline points="1328,326 1328,461" stroke="#a2a2a2" fill="none"/>
<polyline points="1328,461 1328,571 1361,571" stroke="#0000ff" fill="none"/>
<polyline points="1328,326 1361,326" stroke="#a2a2a2" fill="none"/>
<polygon points="1276,509 1304,518 1304,557 1276,567" fill="#dcdcdc" stroke="#a2a2a2"/>
<polyline points="1276,523 1304,538 1276,552" stroke="#a2a2a2" fill="none"/>
<polyline points="1304,538 1352,538" stroke="#a2a2a2" fill="none"/>
<polyline points="1352,355 1361,355" stroke="#a2a2a2" fill="none"/>
<polyline points="1352,355 1352,600 1361,600" stroke="#a2a2a2" fill="none"/>
<polygon points="1276,960 1304,970 1304,1009 1276,1018" fill="#dcdcdc" stroke="#0000ff"/>
<polyline points="1276,1003 1304,989" stroke="#a2a2a2" fill="none"/>
<polyline points="1276,974 1304,989" stroke="#0000ff" fill="none"/>
<polyline points="1304,989 1328,989" stroke="#0000ff" fill="none"/>
<polyline points="1328,888 1328,989" stroke="#a2a2a2" fill="none"/>
<polyline points="1328,989 1328,1133 1361,1133" stroke="#0000ff" fill="none"/>
<polyline points="1328,888 1361,888" stroke="#a2a2a2" fill="none"/>
<polygon points="1276,1037 1304,1046 1304,1086 1276,1095" fill="#dcdcdc" stroke="#a2a2a2"/>
<polyline points="1276,1051 1304,1066 1276,1080" stroke="#a2a2a2" fill="none"/>
<polyline points="1304,1066 1352,1066" stroke="#a2a2a2" fill="none"/>
<polyline points="1352,917 1361,917" stroke="#a2a2a2" fill="none"/>
<polyline points="1352,917 1352,1162 1361,1162" stroke="#a2a2a2" fill="none"/>
<polyline points="1439,269 1516,269 1516,297 1544,297" stroke="#a2a2a2" fill="none"/>
<polyline points="1439,297 1501,297 1501,317" stroke="#a2a2a2" fill="none"/>
<polyline points="1439,326 1487,326" stroke="#a2a2a2" fill="none"/>
<polyline points="1439,355 1487,355" stroke="#a2a2a2" fill="none"/>
<polyline points="1462,355 1462,398 1612,398 1612,384 1636,384" stroke="#a2a2a2" fill="none"/>
<polyline points="1516,341 1530,341 1530,317 1554,317" stroke="#a2a2a2" fill="none"/>
<polyline points="1439,384 1573,384 1573,336 1636,336" stroke="#a2a2a2" fill="none"/>
<polyline points="1439,413 1592,413 1592,365 1636,365" stroke="#a2a2a2" fill="none"/>
<polyline points="1439,441 1674,441 1674,413" stroke="#a2a2a2" fill="none"/>
<polygon points="1487,312 1516,322 1516,360 1487,370" fill="#dcdcdc" stroke="#a2a2a2"/>
<text x="1493" y="328" fill="#a2a2a2" class="tp">0</text>
<text x="1493" y="357" fill="#a2a2a2" class="tp">1</text>
<polygon points="1554,288 1563,288 1572,290 1581,298 1583,307 1581,316 1572,324 1562,326 1554,326" fill="#dcdcdc" stroke="#a2a2a2"/>
<circle cx="1548.7" cy="297.4" r="4.5" fill="#dcdcdc" stroke="#a2a2a2"/>
<polyline points="1583,307 1636,307" stroke="#a2a2a2" fill="none"/>
<rect x="1636" y="288" width="77" height="125" fill="#dcdcdc" stroke="#a2a2a2"/>
<polyline points="1636,328 1646,336 1636,345" stroke="#a2a2a2" fill="none"/>
<rect x="1665" y="394" width="20" height="19" fill="#c8c8c8" stroke="#a2a2a2"/>
<text x="1643" y="310" fill="#a2a2a2" class="tp">D</text>
<text x="1704" y="310" fill="#a2a2a2" class="tp" text-anchor="middle">Q</text>
<text x="1640" y="367" fill="#a2a2a2" class="tp">en</text>
<text x="1640" y="386" fill="#a2a2a2" class="tp">data</text>
<text x="1674.7" y="407" fill="#a2a2a2" class="tp" text-anchor="middle">C</text>
<polyline points="1713,302 1784,302 1784,278 1804,278" stroke="#a2a2a2" fill="none"/>
<polygon points="1361,263 1430,263 1438,269 1430,275 1361,275" fill="#dcdcdc" stroke="#a2a2a2"/>
<text x="1367" y="273.3" fill="#a2a2a2" class="t">SCLR</text>
<polygon points="1361,291 1430,291 1438,297 1430,303 1361,303" fill="#dcdcdc" stroke="#a2a2a2"/>
<text x="1367" y="301.3" fill="#a2a2a2" class="t">SLOAD</text>
<polygon points="1361,320 1430,320 1438,326 1430,332 1361,332" fill="#dcdcdc" stroke="#a2a2a2"/>
<text x="1367" y="330.3" fill="#a2a2a2" class="t">DATAIN</text>
<polygon points="1361,349 1430,349 1438,355 1430,361 1361,361" fill="#dcdcdc" stroke="#a2a2a2"/>
<text x="1367" y="359.3" fill="#a2a2a2" class="t">SDATA</text>
<polygon points="1361,378 1430,378 1438,384 1430,390 1361,390" fill="#dcdcdc" stroke="#a2a2a2"/>
<text x="1367" y="388.3" fill="#a2a2a2" class="t">CLK</text>
<polygon points="1361,407 1430,407 1438,413 1430,419 1361,419" fill="#dcdcdc" stroke="#a2a2a2"/>
<text x="1367" y="417.3" fill="#a2a2a2" class="t">ENA</text>
<polygon points="1361,435 1430,435 1438,441 1430,447 1361,447" fill="#dcdcdc" stroke="#a2a2a2"/>
<text x="1367" y="445.3" fill="#a2a2a2" class="t">ACLR</text>
<polygon points="1804,272 1873,272 1881,278 1873,284 1804,284" fill="#dcdcdc" stroke="#a2a2a2"/>
<text x="1810" y="282.3" fill="#a2a2a2" class="t">REGOUT</text>
<polyline points="1439,514 1516,514 1516,542 1544,542" stroke="#a2a2a2" fill="none"/>
<polyline points="1439,542 1501,542 1501,562" stroke="#a2a2a2" fill="none"/>
<polyline points="1439,571 1487,571" stroke="#0000ff" fill="none"/>
<polyline points="1439,600 1487,600" stroke="#a2a2a2" fill="none"/>
<polyline points="1462,600 1462,644 1612,644 1612,629 1636,629" stroke="#a2a2a2" fill="none"/>
<polyline points="1516,586 1530,586 1530,562 1554,562" stroke="#0000ff" fill="none"/>
<polyline points="1439,629 1573,629 1573,581 1636,581" stroke="#0000ff" fill="none"/>
<polyline points="1439,658 1592,658 1592,610 1636,610" stroke="#a2a2a2" fill="none"/>
<polyline points="1439,686 1674,686 1674,658" stroke="#a2a2a2" fill="none"/>
<polygon points="1487,558 1516,567 1516,605 1487,614" fill="#dcdcdc" stroke="#0000ff"/>
<text x="1493" y="573" fill="#0000ff" class="tp">0</text>
<text x="1493" y="602" fill="#0000ff" class="tp">1</text>
<polygon points="1554,533 1563,533 1572,535 1581,543 1583,552 1581,561 1572,569 1562,571 1554,571" fill="#dcdcdc" stroke="#0000ff"/>
<circle cx="1548.7" cy="542.4" r="4.5" fill="#dcdcdc" stroke="#0000ff"/>
<polyline points="1583,552 1636,552" stroke="#0000ff" fill="none"/>
<rect x="1636" y="533" width="77" height="125" fill="#dcdcdc" stroke="#0000ff"/>
<polyline points="1636,573 1646,582 1636,590" stroke="#0000ff" fill="none"/>
<rect x="1665" y="639" width="20" height="19" fill="#c8c8c8" stroke="#0000ff"/>
<text x="1643" y="555" fill="#0000ff" class="tp">D</text>
<text x="1704" y="555" fill="#0000ff" class="tp" text-anchor="middle">Q</text>
<text x="1640" y="612" fill="#0000ff" class="tp">en</text>
<text x="1640" y="631" fill="#0000ff" class="tp">data</text>
<text x="1674.7" y="652" fill="#0000ff" class="tp" text-anchor="middle">C</text>
<polyline points="1713,547 1784,547 1784,523 1804,523" stroke="#0000ff" fill="none"/>
<polygon points="1361,508 1430,508 1438,514 1430,520 1361,520" fill="#dcdcdc" stroke="#a2a2a2"/>
<text x="1367" y="518.3" fill="#a2a2a2" class="t">SCLR</text>
<polygon points="1361,536 1430,536 1438,542 1430,548 1361,548" fill="#dcdcdc" stroke="#a2a2a2"/>
<text x="1367" y="546.3" fill="#a2a2a2" class="t">SLOAD</text>
<polygon points="1361,565 1430,565 1438,571 1430,577 1361,577" fill="#dcdcdc" stroke="#0000ff"/>
<text x="1367" y="575.3" fill="#0000ff" class="t">DATAIN</text>
<polygon points="1361,594 1430,594 1438,600 1430,606 1361,606" fill="#dcdcdc" stroke="#a2a2a2"/>
<text x="1367" y="604.3" fill="#a2a2a2" class="t">SDATA</text>
<polygon points="1361,623 1430,623 1438,629 1430,635 1361,635" fill="#dcdcdc" stroke="#0000ff"/>
<text x="1367" y="633.3" fill="#0000ff" class="t">CLK</text>
<polygon points="1361,652 1430,652 1438,658 1430,664 1361,664" fill="#dcdcdc" stroke="#a2a2a2"/>
<text x="1367" y="662.3" fill="#a2a2a2" class="t">ENA</text>
<polygon points="1361,680 1430,680 1438,686 1430,692 1361,692" fill="#dcdcdc" stroke="#a2a2a2"/>
<text x="1367" y="690.3" fill="#a2a2a2" class="t">!ACLR</text>
<polygon points="1804,517 1873,517 1881,523 1873,529 1804,529" fill="#dcdcdc" stroke="#0000ff"/>
<text x="1810" y="527.3" fill="#0000ff" class="t">REGOUT</text>
<polyline points="1439,831 1516,831 1516,859 1544,859" stroke="#a2a2a2" fill="none"/>
<polyline points="1439,859 1501,859 1501,879" stroke="#a2a2a2" fill="none"/>
<polyline points="1439,888 1487,888" stroke="#a2a2a2" fill="none"/>
<polyline points="1439,917 1487,917" stroke="#a2a2a2" fill="none"/>
<polyline points="1462,917 1462,960 1612,960 1612,946 1636,946" stroke="#a2a2a2" fill="none"/>
<polyline points="1516,903 1530,903 1530,879 1554,879" stroke="#a2a2a2" fill="none"/>
<polyline points="1439,946 1573,946 1573,898 1636,898" stroke="#a2a2a2" fill="none"/>
<polyline points="1439,975 1592,975 1592,927 1636,927" stroke="#a2a2a2" fill="none"/>
<polyline points="1439,1003 1674,1003 1674,975" stroke="#a2a2a2" fill="none"/>
<polygon points="1487,874 1516,884 1516,922 1487,932" fill="#dcdcdc" stroke="#a2a2a2"/>
<text x="1493" y="890" fill="#a2a2a2" class="tp">0</text>
<text x="1493" y="919" fill="#a2a2a2" class="tp">1</text>
<polygon points="1554,850 1563,850 1572,852 1581,860 1583,869 1581,878 1572,886 1562,888 1554,888" fill="#dcdcdc" stroke="#a2a2a2"/>
<circle cx="1548.7" cy="859.4" r="4.5" fill="#dcdcdc" stroke="#a2a2a2"/>
<polyline points="1583,869 1636,869" stroke="#a2a2a2" fill="none"/>
<rect x="1636" y="850" width="77" height="125" fill="#dcdcdc" stroke="#a2a2a2"/>
<polyline points="1636,890 1646,898 1636,907" stroke="#a2a2a2" fill="none"/>
<rect x="1665" y="956" width="20" height="19" fill="#c8c8c8" stroke="#a2a2a2"/>
<text x="1643" y="872" fill="#a2a2a2" class="tp">D</text>
<text x="1704" y="872" fill="#a2a2a2" class="tp" text-anchor="middle">Q</text>
<text x="1640" y="929" fill="#a2a2a2" class="tp">en</text>
<text x="1640" y="948" fill="#a2a2a2" class="tp">data</text>
<text x="1674.7" y="969" fill="#a2a2a2" class="tp" text-anchor="middle">C</text>
<polyline points="1713,864 1784,864 1784,840 1804,840" stroke="#a2a2a2" fill="none"/>
<polygon points="1361,825 1430,825 1438,831 1430,837 1361,837" fill="#dcdcdc" stroke="#a2a2a2"/>
<text x="1367" y="835.3" fill="#a2a2a2" class="t">SCLR</text>
<polygon points="1361,853 1430,853 1438,859 1430,865 1361,865" fill="#dcdcdc" stroke="#a2a2a2"/>
<text x="1367" y="863.3" fill="#a2a2a2" class="t">SLOAD</text>
<polygon points="1361,882 1430,882 1438,888 1430,894 1361,894" fill="#dcdcdc" stroke="#a2a2a2"/>
<text x="1367" y="892.3" fill="#a2a2a2" class="t">DATAIN</text>
<polygon points="1361,911 1430,911 1438,917 1430,923 1361,923" fill="#dcdcdc" stroke="#a2a2a2"/>
<text x="1367" y="921.3" fill="#a2a2a2" class="t">SDATA</text>
<polygon points="1361,940 1430,940 1438,946 1430,952 1361,952" fill="#dcdcdc" stroke="#a2a2a2"/>
<text x="1367" y="950.3" fill="#a2a2a2" class="t">CLK</text>
<polygon points="1361,969 1430,969 1438,975 1430,981 1361,981" fill="#dcdcdc" stroke="#a2a2a2"/>
<text x="1367" y="979.3" fill="#a2a2a2" class="t">ENA</text>
<polygon points="1361,997 1430,997 1438,1003 1430,1009 1361,1009" fill="#dcdcdc" stroke="#a2a2a2"/>
<text x="1367" y="1007.3" fill="#a2a2a2" class="t">ACLR</text>
<polygon points="1804,834 1873,834 1881,840 1873,846 1804,846" fill="#dcdcdc" stroke="#a2a2a2"/>
<text x="1810" y="844.3" fill="#a2a2a2" class="t">REGOUT</text>
<polyline points="1439,1076 1516,1076 1516,1104 1544,1104" stroke="#a2a2a2" fill="none"/>
<polyline points="1439,1104 1501,1104 1501,1124" stroke="#a2a2a2" fill="none"/>
<polyline points="1439,1133 1487,1133" stroke="#0000ff" fill="none"/>
<polyline points="1439,1162 1487,1162" stroke="#a2a2a2" fill="none"/>
<polyline points="1462,1162 1462,1206 1612,1206 1612,1191 1636,1191" stroke="#a2a2a2" fill="none"/>
<polyline points="1516,1148 1530,1148 1530,1124 1554,1124" stroke="#0000ff" fill="none"/>
<polyline points="1439,1191 1573,1191 1573,1143 1636,1143" stroke="#0000ff" fill="none"/>
<polyline points="1439,1220 1592,1220 1592,1172 1636,1172" stroke="#a2a2a2" fill="none"/>
<polyline points="1439,1248 1674,1248 1674,1220" stroke="#a2a2a2" fill="none"/>
<polygon points="1487,1120 1516,1129 1516,1167 1487,1176" fill="#dcdcdc" stroke="#0000ff"/>
<text x="1493" y="1135" fill="#0000ff" class="tp">0</text>
<text x="1493" y="1164" fill="#0000ff" class="tp">1</text>
<polygon points="1554,1095 1563,1095 1572,1097 1581,1105 1583,1114 1581,1123 1572,1131 1562,1133 1554,1133" fill="#dcdcdc" stroke="#0000ff"/>
<circle cx="1548.7" cy="1104.4" r="4.5" fill="#dcdcdc" stroke="#0000ff"/>
<polyline points="1583,1114 1636,1114" stroke="#0000ff" fill="none"/>
<rect x="1636" y="1095" width="77" height="125" fill="#dcdcdc" stroke="#0000ff"/>
<polyline points="1636,1135 1646,1144 1636,1152" stroke="#0000ff" fill="none"/>
<rect x="1665" y="1201" width="20" height="19" fill="#c8c8c8" stroke="#0000ff"/>
<text x="1643" y="1117" fill="#0000ff" class="tp">D</text>
<text x="1704" y="1117" fill="#0000ff" class="tp" text-anchor="middle">Q</text>
<text x="1640" y="1174" fill="#0000ff" class="tp">en</text>
<text x="1640" y="1193" fill="#0000ff" class="tp">data</text>
<text x="1674.7" y="1214" fill="#0000ff" class="tp" text-anchor="middle">C</text>
<polyline points="1713,1109 1784,1109 1784,1085 1804,1085" stroke="#0000ff" fill="none"/>
<polygon points="1361,1070 1430,1070 1438,1076 1430,1082 1361,1082" fill="#dcdcdc" stroke="#a2a2a2"/>
<text x="1367" y="1080.3" fill="#a2a2a2" class="t">SCLR</text>
<polygon points="1361,1098 1430,1098 1438,1104 1430,1110 1361,1110" fill="#dcdcdc" stroke="#a2a2a2"/>
<text x="1367" y="1108.3" fill="#a2a2a2" class="t">SLOAD</text>
<polygon points="1361,1127 1430,1127 1438,1133 1430,1139 1361,1139" fill="#dcdcdc" stroke="#0000ff"/>
<text x="1367" y="1137.3" fill="#0000ff" class="t">DATAIN</text>
<polygon points="1361,1156 1430,1156 1438,1162 1430,1168 1361,1168" fill="#dcdcdc" stroke="#a2a2a2"/>
<text x="1367" y="1166.3" fill="#a2a2a2" class="t">SDATA</text>
<polygon points="1361,1185 1430,1185 1438,1191 1430,1197 1361,1197" fill="#dcdcdc" stroke="#0000ff"/>
<text x="1367" y="1195.3" fill="#0000ff" class="t">CLK</text>
<polygon points="1361,1214 1430,1214 1438,1220 1430,1226 1361,1226" fill="#dcdcdc" stroke="#a2a2a2"/>
<text x="1367" y="1224.3" fill="#a2a2a2" class="t">ENA</text>
<polygon points="1361,1242 1430,1242 1438,1248 1430,1254 1361,1254" fill="#dcdcdc" stroke="#a2a2a2"/>
<text x="1367" y="1252.3" fill="#a2a2a2" class="t">!ACLR</text>
<polygon points="1804,1079 1873,1079 1881,1085 1873,1091 1804,1091" fill="#dcdcdc" stroke="#0000ff"/>
<text x="1810" y="1089.3" fill="#0000ff" class="t">REGOUT</text>
<polyline points="1713,302 1886,302 1886,249 1688,249" stroke="#a2a2a2" fill="none"/>
<polyline points="1713,547 1900,547 1900,231 1688,231" stroke="#0000ff" fill="none"/>
<polyline points="1713,864 1886,864 1886,787 1688,787" stroke="#a2a2a2" fill="none"/>
<polyline points="1713,1109 1900,1109 1900,768 1688,768" stroke="#0000ff" fill="none"/>
<polygon points="1664,226 1688,216 1688,264 1664,254" fill="#dcdcdc" stroke="#0000ff"/>
<polyline points="1664,240 1688,249" stroke="#a2a2a2" fill="none"/>
<polyline points="1664,240 1688,231" stroke="#0000ff" fill="none"/>
<polygon points="1664,764 1688,754 1688,802 1664,792" fill="#dcdcdc" stroke="#0000ff"/>
<polyline points="1664,778 1688,787" stroke="#a2a2a2" fill="none"/>
<polyline points="1664,778 1688,769" stroke="#0000ff" fill="none"/>
<circle cx="209" cy="259" r="3.6" fill="#a2a2a2" stroke="none"/>
<circle cx="171" cy="293" r="3.6" fill="#a2a2a2" stroke="none"/>
<circle cx="666" cy="293" r="3.6" fill="#a2a2a2" stroke="none"/>
<circle cx="142" cy="562" r="3.6" fill="#a2a2a2" stroke="none"/>
<circle cx="156.6" cy="701" r="3.6" fill="#a2a2a2" stroke="none"/>
<circle cx="430" cy="672" r="3.6" fill="#0000ff" stroke="none"/>
<circle cx="453" cy="514" r="3.6" fill="#0000ff" stroke="none"/>
<circle cx="453" cy="562" r="3.6" fill="#0000ff" stroke="none"/>
<circle cx="453" cy="633.5" r="3.6" fill="#a2a2a2" stroke="none"/>
<circle cx="430" cy="907.3" r="3.6" fill="#a2a2a2" stroke="none"/>
<circle cx="430" cy="1041.8" r="3.6" fill="#a2a2a2" stroke="none"/>
<circle cx="430" cy="1090" r="3.6" fill="#a2a2a2" stroke="none"/>
<circle cx="454" cy="1200" r="3.6" fill="#0000ff" stroke="none"/>
<circle cx="171" cy="821" r="3.6" fill="#a2a2a2" stroke="none"/>
<circle cx="666" cy="821" r="3.6" fill="#a2a2a2" stroke="none"/>
<circle cx="209" cy="1268" r="3.6" fill="#a2a2a2" stroke="none"/>
<circle cx="627" cy="489.6" r="3.6" fill="#0000ff" stroke="none"/>
<circle cx="641" cy="609.7" r="3.6" fill="#0000ff" stroke="none"/>
<circle cx="737.4" cy="595.6" r="3.6" fill="#0000ff" stroke="none"/>
<circle cx="737.4" cy="648.4" r="3.6" fill="#0000ff" stroke="none"/>
<circle cx="699" cy="365" r="3.6" fill="#0000ff" stroke="none"/>
<circle cx="699" cy="537.6" r="3.6" fill="#a2a2a2" stroke="none"/>
<circle cx="627" cy="1017.8" r="3.6" fill="#0000ff" stroke="none"/>
<circle cx="641" cy="1138" r="3.6" fill="#0000ff" stroke="none"/>
<circle cx="689.4" cy="1123.4" r="3.6" fill="#0000ff" stroke="none"/>
<circle cx="756.7" cy="1065.8" r="3.6" fill="#a2a2a2" stroke="none"/>
<circle cx="718.4" cy="893.2" r="3.6" fill="#0000ff" stroke="none"/>
<circle cx="1203.4" cy="446" r="3.6" fill="#a2a2a2" stroke="none"/>
<circle cx="1203.4" cy="974.3" r="3.6" fill="#a2a2a2" stroke="none"/>
<circle cx="1184.3" cy="580.7" r="3.6" fill="#a2a2a2" stroke="none"/>
<circle cx="1184.3" cy="1109" r="3.6" fill="#a2a2a2" stroke="none"/>
<circle cx="1328.3" cy="461" r="3.6" fill="#a2a2a2" stroke="none"/>
<circle cx="1352" cy="537.6" r="3.6" fill="#a2a2a2" stroke="none"/>
<circle cx="1328.3" cy="989.3" r="3.6" fill="#a2a2a2" stroke="none"/>
<circle cx="1352" cy="1065.9" r="3.6" fill="#a2a2a2" stroke="none"/>
<circle cx="1462.5" cy="355" r="3.6" fill="#a2a2a2" stroke="none"/>
<circle cx="1784.2" cy="302" r="3.6" fill="#a2a2a2" stroke="none"/>
<circle cx="1462.5" cy="600" r="3.6" fill="#a2a2a2" stroke="none"/>
<circle cx="1784.2" cy="547" r="3.6" fill="#0000ff" stroke="none"/>
<circle cx="1462.5" cy="917" r="3.6" fill="#a2a2a2" stroke="none"/>
<circle cx="1784.2" cy="864" r="3.6" fill="#a2a2a2" stroke="none"/>
<circle cx="1462.5" cy="1162" r="3.6" fill="#a2a2a2" stroke="none"/>
<circle cx="1784.2" cy="1109" r="3.6" fill="#0000ff" stroke="none"/>
</svg>
<div class="a dots" style="left:1967px;top:185px;width:5px;height:1163px"></div>
<svg class="a" style="left:1977px;top:189px" width="13" height="44"><g fill="none" stroke="#555"><rect x="1.5" y="1.5" width="10" height="10" rx="1.5"/><path d="M4,4L9,9M9,4L4,9" stroke-width="1.6"/><rect x="1.5" y="15.5" width="10" height="10" rx="1.5" stroke="#6a6a6a"/><rect x="3.5" y="19.5" width="4" height="4" stroke="#6a6a6a"/><path d="M5.5,19.5V17.5H9.5V21.5H7.5" stroke="#6a6a6a"/><path d="M4,30.5H9V35.5H4ZM6.5,35.5V41M2.5,35.5H10.5" stroke="#222" stroke-width="1.3"/></g></svg>
<div class="a" style="left:1973px;top:1280px;width:18px;height:62px;"><div style="position:absolute;left:0;top:62px;transform:rotate(-90deg);transform-origin:0 0;font-size:12px;white-space:nowrap;color:#333;line-height:18px">Properties</div></div>
<div class="a" style="left:1991px;top:185px;width:2px;height:1160px;background:#b4b4b4;border-right:1px solid #eee"></div>
<div class="a" style="left:1995px;top:187px;width:2420px;height:1133px;background:#fbfbfb;border:1px solid #a8a8a8;width:420px"></div>
<div class="a hdr" style="left:1996px;top:188px;width:418px;height:20px;border-bottom:1px solid #b4b4b4"></div>
<div class="cell" style="left:1996px;top:192px;width:113px;text-align:center;font-size:11.5px">Properties/Modes</div>
<div class="cell" style="left:2110px;top:192px;width:304px;text-align:center;font-size:11.5px">Values</div>
<div class="vl" style="left:2109px;top:189px;height:19px;background:#c4c4c4"></div>
<div class="a" style="left:1996px;top:208px;width:418px;height:13px;background:#fbfbfb;border-bottom:1px solid #e6e6e6"></div>
<div class="vl" style="left:2109px;top:208px;height:13px;background:#d0d0d0"></div>
<div class="cell" style="left:1999px;top:209px;font-size:11px;color:#202020">F0 LUT Mask</div>
<div class="cell" style="left:2113px;top:209px;font-size:11px;color:#202020">00FF</div>
<div class="a" style="left:1996px;top:221px;width:418px;height:13px;background:#a3a3a8;border-bottom:1px solid #b4b4b9"></div>
<div class="vl" style="left:2109px;top:221px;height:13px;background:#b0b0b5"></div>
<div class="cell" style="left:1999px;top:222px;font-size:11px;color:#202020">F1 LUT Mask</div>
<div class="cell" style="left:2113px;top:222px;font-size:11px;color:#202020">00FF</div>
<div class="a" style="left:1996px;top:234px;width:418px;height:13px;background:#fbfbfb;border-bottom:1px solid #e6e6e6"></div>
<div class="vl" style="left:2109px;top:234px;height:13px;background:#d0d0d0"></div>
<div class="cell" style="left:1999px;top:235px;font-size:11px;color:#202020">F2 LUT Mask</div>
<div class="cell" style="left:2113px;top:235px;font-size:11px;color:#202020">F0F0</div>
<div class="a" style="left:1996px;top:247px;width:418px;height:13px;background:#a3a3a8;border-bottom:1px solid #b4b4b9"></div>
<div class="vl" style="left:2109px;top:247px;height:13px;background:#b0b0b5"></div>
<div class="cell" style="left:1999px;top:248px;font-size:11px;color:#202020">F3 LUT Mask</div>
<div class="cell" style="left:2113px;top:248px;font-size:11px;color:#202020">F0F0</div>
<div class="a" style="left:1996px;top:260px;width:418px;height:13px;background:#a3a3a8;border-bottom:1px solid #b4b4b9"></div>
<div class="vl" style="left:2109px;top:260px;height:13px;background:#b0b0b5"></div>
<div class="cell" style="left:1999px;top:261px;font-size:11px;color:#202020">Full Node Name</div>
<div class="cell" style="left:2113px;top:261px;font-size:11px;color:#202020">|toplevel|Add0~105</div>
<div class="a" style="left:1996px;top:273px;width:418px;height:13px;background:#a3a3a8;border-bottom:1px solid #b4b4b9"></div>
<div class="vl" style="left:2109px;top:273px;height:13px;background:#b0b0b5"></div>
<div class="cell" style="left:1999px;top:274px;font-size:11px;color:#202020">Location String</div>
<div class="cell" style="left:2113px;top:274px;font-size:11px;color:#202020">LABCELL_X80_Y3_N30</div>
<div class="a" style="left:1996px;top:286px;width:418px;height:13px;background:#a3a3a8;border-bottom:1px solid #b4b4b9"></div>
<div class="vl" style="left:2109px;top:286px;height:13px;background:#b0b0b5"></div>
<div class="cell" style="left:1999px;top:287px;font-size:11px;color:#202020">Latch Type</div>
<div class="cell" style="left:2113px;top:287px;font-size:11px;color:#202020">none</div>
<div class="a" style="left:1996px;top:299px;width:418px;height:13px;background:#fbfbfb;border-bottom:1px solid #e6e6e6"></div>
<div class="vl" style="left:2109px;top:299px;height:13px;background:#d0d0d0"></div>
<div class="cell" style="left:1999px;top:300px;font-size:11px;color:#202020">F0 LUT Equation</div>
<div class="cell" style="left:2113px;top:300px;font-size:11px;color:#202020">!d</div>
<div class="a" style="left:1996px;top:312px;width:418px;height:13px;background:#a3a3a8;border-bottom:1px solid #b4b4b9"></div>
<div class="vl" style="left:2109px;top:312px;height:13px;background:#b0b0b5"></div>
<div class="cell" style="left:1999px;top:313px;font-size:11px;color:#202020">F1 LUT Equation</div>
<div class="cell" style="left:2113px;top:313px;font-size:11px;color:#202020">N/A</div>
<div class="a" style="left:1996px;top:325px;width:418px;height:13px;background:#fbfbfb;border-bottom:1px solid #e6e6e6"></div>
<div class="vl" style="left:2109px;top:325px;height:13px;background:#d0d0d0"></div>
<div class="cell" style="left:1999px;top:326px;font-size:11px;color:#202020">F2 LUT Equation</div>
<div class="cell" style="left:2113px;top:326px;font-size:11px;color:#202020">c</div>
<div class="a" style="left:1996px;top:338px;width:418px;height:13px;background:#a3a3a8;border-bottom:1px solid #b4b4b9"></div>
<div class="vl" style="left:2109px;top:338px;height:13px;background:#b0b0b5"></div>
<div class="cell" style="left:1999px;top:339px;font-size:11px;color:#202020">F3 LUT Equation</div>
<div class="cell" style="left:2113px;top:339px;font-size:11px;color:#202020">N/A</div>
<div class="a" style="left:1996px;top:351px;width:418px;height:13px;background:#a3a3a8;border-bottom:1px solid #b4b4b9"></div>
<div class="vl" style="left:2109px;top:351px;height:13px;background:#b0b0b5"></div>
<div class="cell" style="left:1999px;top:352px;font-size:11px;color:#202020">Combout Equation</div>
<div class="cell" style="left:2113px;top:352px;font-size:11px;color:#202020">N/A</div>
<div class="a" style="left:1996px;top:364px;width:418px;height:13px;background:#a3a3a8;border-bottom:1px solid #b4b4b9"></div>
<div class="vl" style="left:2109px;top:364px;height:13px;background:#b0b0b5"></div>
<div class="cell" style="left:1999px;top:365px;font-size:11px;color:#202020">Sumout Equation</div>
<div class="cell" style="left:2113px;top:365px;font-size:11px;color:#202020">SUM(( D ) + ( C ) + ( !VCC ))</div>
<div class="a" style="left:1996px;top:377px;width:418px;height:13px;background:#a3a3a8;border-bottom:1px solid #b4b4b9"></div>
<div class="vl" style="left:2109px;top:377px;height:13px;background:#b0b0b5"></div>
<div class="cell" style="left:1999px;top:378px;font-size:11px;color:#202020">Carryout Equation</div>
<div class="cell" style="left:2113px;top:378px;font-size:11px;color:#202020">CARRY(( D ) + ( C ) + ( !VCC ))</div>
<div class="a" style="left:1996px;top:390px;width:418px;height:13px;background:#a3a3a8;border-bottom:1px solid #b4b4b9"></div>
<div class="vl" style="left:2109px;top:390px;height:13px;background:#b0b0b5"></div>
<div class="cell" style="left:1999px;top:391px;font-size:11px;color:#202020">Shareout Equation</div>
<div class="cell" style="left:2113px;top:391px;font-size:11px;color:#202020">N/A</div>
<div class="a" style="left:1995px;top:1320px;width:420px;height:1px;background:#a0a0a0"></div>
<svg class="a" style="left:1990px;top:1318px" width="427" height="32"><g stroke="#3a3a3a" stroke-width="1"><path d="M345.5,1.5 L353.5,24 Q355.5,27.5 360.5,27.5 H398" fill="#cdcdcd"/><path d="M211.5,1.5 L219.5,24 Q221.5,27.5 226.5,27.5 H330.5 Q335.5,27.5 337.5,24 L345.5,1.5" fill="#cdcdcd"/><path d="M118.8,1.5 L126.8,24 Q128.8,27.5 133.8,27.5 H196.5 Q201.5,27.5 203.5,24 L211.5,1.5" fill="#cdcdcd"/><path d="M3.8,1.5 L11.8,24 Q13.8,27.5 18.8,27.5 H103.8 Q108.8,27.5 110.8,24 L118.8,1.5" fill="#fbfbfb"/></g><rect x="398.5" y="4.5" width="11" height="24" fill="#c8c8c8" stroke="#bbb"/><rect x="413.5" y="4.5" width="12" height="24" fill="#dcdcdc" stroke="#bbb"/><path d="M406,12L401,16.5L406,21Z" fill="#aaa"/><path d="M417,12L422,16.5L417,21Z" fill="#333"/></svg>
<div class="cell" style="left:2001px;top:1326px;font-size:11.5px;color:#222;letter-spacing:0.4px">Top Combinational</div>
<div class="cell" style="left:2117px;top:1325px;font-size:11.5px;color:#333;letter-spacing:0.4px">Top 2 Register</div>
<div class="cell" style="left:2210px;top:1325px;font-size:11.5px;color:#333;letter-spacing:0.4px">Bottom Combinational</div>
<div class="cell" style="left:2344px;top:1325px;font-size:11.5px;color:#333;width:44px;letter-spacing:0.4px">Bottom</div>
<div class="a dots" style="left:34px;top:1348px;width:2383px;height:5px"></div>
<svg class="a" style="left:38px;top:1357px" width="13" height="44"><g fill="none" stroke="#555"><rect x="1.5" y="1.5" width="10" height="10" rx="1.5"/><path d="M4,4L9,9M9,4L4,9" stroke-width="1.6"/><rect x="1.5" y="15.5" width="10" height="10" rx="1.5" stroke="#6a6a6a"/><rect x="3.5" y="19.5" width="4" height="4" stroke="#6a6a6a"/><path d="M5.5,19.5V17.5H9.5V21.5H7.5" stroke="#6a6a6a"/><path d="M4,30.5H9V35.5H4ZM6.5,35.5V41M2.5,35.5H10.5" stroke="#222" stroke-width="1.3"/></g></svg>
<div class="a" style="left:35px;top:1553px;width:18px;height:72px;"><div style="position:absolute;left:0;top:72px;transform:rotate(-90deg);transform-origin:0 0;font-size:12px;white-space:nowrap;color:#333;line-height:18px">Connectivity</div></div>
<div class="a" style="left:52px;top:1353px;width:2px;height:279px;background:#b4b4b4;border-right:1px solid #eee"></div>
<div class="a" style="left:55px;top:1353px;width:1162px;height:279px;background:#fbfbfb;border-left:1px solid #a8a8a8;border-top:1px solid #a8a8a8"></div>
<div class="a hdr" style="left:56px;top:1354px;width:1161px;height:21px;border-bottom:1px solid #b4b4b4"></div>
<div class="cell" style="left:56px;top:1357px;width:150px;text-align:center;font-size:11.5px">Input Port Name</div>
<div class="cell" style="left:207px;top:1357px;width:202px;text-align:center;font-size:11.5px">Signal Name</div>
<div class="cell" style="left:410px;top:1357px;width:807px;text-align:center;font-size:11.5px">Inverted</div>
<div class="vl" style="left:206px;top:1354px;height:20px;background:#c4c4c4"></div>
<div class="vl" style="left:409px;top:1354px;height:20px;background:#c4c4c4"></div>
<div class="a" style="left:56px;top:1375px;width:1161px;height:257px;overflow:hidden">
<div class="a" style="left:151px;top:0.00px;width:1010px;height:13px;background:#a3a3a8"></div>
<div class="hl" style="left:0;top:12.50px;width:151px;background:#d8d8d8"></div>
<svg class="a" style="left:8px;top:3.00px" width="10" height="9"><path d="M0.8,0.8H9.2L5,8Z" fill="#6a6a6a" stroke="#2a2a2a" stroke-width="1.2" stroke-linejoin="round"/></svg>
<div class="cell" style="left:21px;top:0px;color:#202020">Top Combinational</div>
<div class="a" style="left:353px;top:13.00px;width:808px;height:13px;background:#a3a3a8;border-bottom:1px solid #b4b4b9"></div>
<div class="hl" style="left:0;top:25.50px;width:353px;background:#d8d8d8"></div>
<div class="vl" style="left:150px;top:13.00px;height:13px;background:#d8d8d8"></div>
<div class="cell" style="left:42px;top:13px;color:#202020">!DATAC</div>
<div class="cell" style="left:154px;top:13px;color:#202020">|toplevel|count[0]</div>
<div class="cell" style="left:357px;top:13px;color:#202020">False</div>
<div class="a" style="left:353px;top:26.00px;width:808px;height:13px;background:#a3a3a8;border-bottom:1px solid #b4b4b9"></div>
<div class="hl" style="left:0;top:38.50px;width:353px;background:#d8d8d8"></div>
<div class="vl" style="left:150px;top:26.00px;height:13px;background:#d8d8d8"></div>
<div class="cell" style="left:42px;top:26px;color:#202020">!DATAE</div>
<div class="cell" style="left:154px;top:26px;color:#202020">&lt;Disconnected&gt;</div>
<div class="cell" style="left:357px;top:26px;color:#202020">False</div>
<div class="a" style="left:353px;top:39.00px;width:808px;height:13px;background:#a3a3a8;border-bottom:1px solid #b4b4b9"></div>
<div class="hl" style="left:0;top:51.50px;width:353px;background:#d8d8d8"></div>
<div class="vl" style="left:150px;top:39.00px;height:13px;background:#d8d8d8"></div>
<div class="cell" style="left:42px;top:39px;color:#202020">!DATAF</div>
<div class="cell" style="left:154px;top:39px;color:#202020">&lt;Disconnected&gt;</div>
<div class="cell" style="left:357px;top:39px;color:#202020">False</div>
<div class="a" style="left:353px;top:52.00px;width:808px;height:13px;background:#a3a3a8;border-bottom:1px solid #b4b4b9"></div>
<div class="hl" style="left:0;top:64.50px;width:353px;background:#d8d8d8"></div>
<div class="vl" style="left:150px;top:52.00px;height:13px;background:#d8d8d8"></div>
<div class="cell" style="left:42px;top:52px;color:#202020">!DATAA</div>
<div class="cell" style="left:154px;top:52px;color:#202020">&lt;Disconnected&gt;</div>
<div class="cell" style="left:357px;top:52px;color:#202020">False</div>
<div class="a" style="left:353px;top:65.00px;width:808px;height:13px;background:#a3a3a8;border-bottom:1px solid #b4b4b9"></div>
<div class="hl" style="left:0;top:77.50px;width:353px;background:#d8d8d8"></div>
<div class="vl" style="left:150px;top:65.00px;height:13px;background:#d8d8d8"></div>
<div class="cell" style="left:42px;top:65px;color:#202020">!DATAB</div>
<div class="cell" style="left:154px;top:65px;color:#202020">&lt;Disconnected&gt;</div>
<div class="cell" style="left:357px;top:65px;color:#202020">False</div>
<div class="a" style="left:353px;top:78.00px;width:808px;height:13px;background:#a3a3a8;border-bottom:1px solid #b4b4b9"></div>
<div class="hl" style="left:0;top:90.50px;width:353px;background:#d8d8d8"></div>
<div class="vl" style="left:150px;top:78.00px;height:13px;background:#d8d8d8"></div>
<div class="cell" style="left:42px;top:78px;color:#202020">!DATAD</div>
<div class="cell" style="left:154px;top:78px;color:#202020">|toplevel|count[1]</div>
<div class="cell" style="left:357px;top:78px;color:#202020">False</div>
<div class="a" style="left:353px;top:91.00px;width:808px;height:13px;background:#a3a3a8;border-bottom:1px solid #b4b4b9"></div>
<div class="hl" style="left:0;top:103.50px;width:353px;background:#d8d8d8"></div>
<div class="vl" style="left:150px;top:91.00px;height:13px;background:#d8d8d8"></div>
<div class="cell" style="left:42px;top:91px;color:#202020">SHAREIN</div>
<div class="cell" style="left:154px;top:91px;color:#202020">&lt;Disconnected&gt;</div>
<div class="cell" style="left:357px;top:91px;color:#202020">False</div>
<div class="a" style="left:353px;top:104.00px;width:808px;height:13px;background:#a3a3a8;border-bottom:1px solid #b4b4b9"></div>
<div class="hl" style="left:0;top:116.50px;width:353px;background:#d8d8d8"></div>
<div class="vl" style="left:150px;top:104.00px;height:13px;background:#d8d8d8"></div>
<div class="cell" style="left:42px;top:104px;color:#202020">CIN</div>
<div class="cell" style="left:154px;top:104px;color:#202020">GND</div>
<div class="cell" style="left:357px;top:104px;color:#202020">True</div>
<div class="a" style="left:151px;top:117.00px;width:1010px;height:13px;background:#a3a3a8"></div>
<div class="hl" style="left:0;top:129.50px;width:151px;background:#d8d8d8"></div>
<svg class="a" style="left:8px;top:120.00px" width="10" height="9"><path d="M0.8,0.8H9.2L5,8Z" fill="#6a6a6a" stroke="#2a2a2a" stroke-width="1.2" stroke-linejoin="round"/></svg>
<div class="cell" style="left:21px;top:117px;color:#202020">Bottom Combinational</div>
<div class="a" style="left:353px;top:130.00px;width:808px;height:13px;background:#a3a3a8;border-bottom:1px solid #b4b4b9"></div>
<div class="hl" style="left:0;top:142.50px;width:353px;background:#d8d8d8"></div>
<div class="vl" style="left:150px;top:130.00px;height:13px;background:#d8d8d8"></div>
<div class="cell" style="left:42px;top:130px;color:#202020">!DATAC</div>
<div class="cell" style="left:154px;top:130px;color:#202020">&lt;Disconnected&gt;</div>
<div class="cell" style="left:357px;top:130px;color:#202020">False</div>
<div class="a" style="left:353px;top:143.00px;width:808px;height:13px;background:#a3a3a8;border-bottom:1px solid #b4b4b9"></div>
<div class="hl" style="left:0;top:155.50px;width:353px;background:#d8d8d8"></div>
<div class="vl" style="left:150px;top:143.00px;height:13px;background:#d8d8d8"></div>
<div class="cell" style="left:42px;top:143px;color:#202020">!DATAE</div>
<div class="cell" style="left:154px;top:143px;color:#202020">&lt;Disconnected&gt;</div>
<div class="cell" style="left:357px;top:143px;color:#202020">False</div>
<div class="a" style="left:353px;top:156.00px;width:808px;height:14px;background:#a3a3a8;border-bottom:1px solid #b4b4b9"></div>
<div class="hl" style="left:0;top:168.50px;width:353px;background:#d8d8d8"></div>
<div class="vl" style="left:150px;top:156.00px;height:13px;background:#d8d8d8"></div>
<div class="cell" style="left:42px;top:156px;color:#202020">!DATAA</div>
<div class="cell" style="left:154px;top:156px;color:#202020">&lt;Disconnected&gt;</div>
<div class="cell" style="left:357px;top:156px;color:#202020">False</div>
<div class="a" style="left:353px;top:170.00px;width:808px;height:13px;background:#a3a3a8;border-bottom:1px solid #b4b4b9"></div>
<div class="hl" style="left:0;top:182.50px;width:353px;background:#d8d8d8"></div>
<div class="vl" style="left:150px;top:170.00px;height:13px;background:#d8d8d8"></div>
<div class="cell" style="left:42px;top:170px;color:#202020">!DATAB</div>
<div class="cell" style="left:154px;top:170px;color:#202020">&lt;Disconnected&gt;</div>
<div class="cell" style="left:357px;top:170px;color:#202020">False</div>
<div class="a" style="left:353px;top:183.00px;width:808px;height:13px;background:#a3a3a8;border-bottom:1px solid #b4b4b9"></div>
<div class="hl" style="left:0;top:195.50px;width:353px;background:#d8d8d8"></div>
<div class="vl" style="left:150px;top:183.00px;height:13px;background:#d8d8d8"></div>
<div class="cell" style="left:42px;top:183px;color:#202020">!DATAF</div>
<div class="cell" style="left:154px;top:183px;color:#202020">&lt;Disconnected&gt;</div>
<div class="cell" style="left:357px;top:183px;color:#202020">False</div>
<div class="a" style="left:353px;top:196.00px;width:808px;height:13px;background:#a3a3a8;border-bottom:1px solid #b4b4b9"></div>
<div class="hl" style="left:0;top:208.50px;width:353px;background:#d8d8d8"></div>
<div class="vl" style="left:150px;top:196.00px;height:13px;background:#d8d8d8"></div>
<div class="cell" style="left:42px;top:196px;color:#202020">!DATAD</div>
<div class="cell" style="left:154px;top:196px;color:#202020">|toplevel|count[2]</div>
<div class="cell" style="left:357px;top:196px;color:#202020">False</div>
<div class="a" style="left:353px;top:209.00px;width:808px;height:13px;background:#a3a3a8;border-bottom:1px solid #b4b4b9"></div>
<div class="hl" style="left:0;top:221.50px;width:353px;background:#d8d8d8"></div>
<div class="vl" style="left:150px;top:209.00px;height:13px;background:#d8d8d8"></div>
<div class="cell" style="left:42px;top:209px;color:#202020">CIN</div>
<div class="cell" style="left:154px;top:209px;color:#202020">|toplevel|Add0~106</div>
<div class="cell" style="left:357px;top:209px;color:#202020">False</div>
<div class="a" style="left:353px;top:222.00px;width:808px;height:13px;background:#a3a3a8;border-bottom:1px solid #b4b4b9"></div>
<div class="hl" style="left:0;top:234.50px;width:353px;background:#d8d8d8"></div>
<div class="vl" style="left:150px;top:222.00px;height:13px;background:#d8d8d8"></div>
<div class="cell" style="left:42px;top:222px;color:#202020">SHAREIN</div>
<div class="cell" style="left:154px;top:222px;color:#202020">&lt;Disconnected&gt;</div>
<div class="cell" style="left:357px;top:222px;color:#202020">False</div>
<div class="a" style="left:151px;top:235.00px;width:1010px;height:13px;background:#a3a3a8"></div>
<div class="hl" style="left:0;top:247.50px;width:151px;background:#d8d8d8"></div>
<svg class="a" style="left:8px;top:238.00px" width="10" height="9"><path d="M0.8,0.8H9.2L5,8Z" fill="#6a6a6a" stroke="#2a2a2a" stroke-width="1.2" stroke-linejoin="round"/></svg>
<div class="cell" style="left:21px;top:235px;color:#202020">Bottom 2 Register</div>
<div class="a" style="left:353px;top:248.00px;width:808px;height:13px;background:#a3a3a8;border-bottom:1px solid #b4b4b9"></div>
<div class="hl" style="left:0;top:260.50px;width:353px;background:#d8d8d8"></div>
<div class="vl" style="left:150px;top:248.00px;height:13px;background:#d8d8d8"></div>
<div class="cell" style="left:42px;top:248px;color:#202020">DATAIN</div>
<div class="cell" style="left:154px;top:248px;color:#202020">|toplevel|Add0~101</div>
<div class="cell" style="left:357px;top:248px;color:#202020">False</div>
</div>
<div class="a" style="left:1217px;top:1353px;width:15px;height:279px;background:linear-gradient(90deg,#e8e8e8,#fafafa,#e8e8e8);border-left:1px solid #c8c8c8"></div>
<div class="a" style="left:1220px;top:1366px;width:9px;height:100px;border:1px solid #a0a0a0;border-radius:5px;background:linear-gradient(90deg,#f4f4f4,#dedede)"></div>
<div class="a dots" style="left:1232px;top:1353px;width:6px;height:279px"></div>
<div class="a" style="left:1239px;top:1353px;width:1176px;height:279px;background:#fbfbfb;border-left:1px solid #a8a8a8;border-top:1px solid #a8a8a8"></div>
<div class="a hdr" style="left:1240px;top:1354px;width:1175px;height:21px;border-bottom:1px solid #b4b4b4"></div>
<div class="cell" style="left:1240px;top:1357px;width:151px;text-align:center;font-size:11.5px">Output Port Name</div>
<div class="cell" style="left:1392px;top:1357px;width:1023px;text-align:center;font-size:11.5px">Signal Name</div>
<div class="vl" style="left:1391px;top:1354px;height:20px;background:#c4c4c4"></div>
<div class="a" style="left:1240px;top:1375px;width:1175px;height:257px;overflow:hidden">
<div class="a" style="left:20px;top:0.00px;width:1155px;height:13px;background:#a3a3a8;border-bottom:1px solid #b4b4b9"></div>
<div class="hl" style="left:0;top:12.50px;width:20px;background:#d8d8d8"></div>
<svg class="a" style="left:8px;top:3.00px" width="10" height="9"><path d="M0.8,0.8H9.2L5,8Z" fill="#6a6a6a" stroke="#2a2a2a" stroke-width="1.2" stroke-linejoin="round"/></svg>
<div class="cell" style="left:23px;top:0px;color:#202020">Top Combinational</div>
<div class="vl" style="left:151px;top:0.00px;height:13px;background:#b0b0b5"></div>
<div class="a" style="left:40px;top:13.00px;width:1135px;height:13px;background:#a3a3a8;border-bottom:1px solid #b4b4b9"></div>
<div class="hl" style="left:0;top:25.50px;width:40px;background:#d8d8d8"></div>
<div class="cell" style="left:43px;top:13px;color:#202020">SUM_OUT</div>
<div class="cell" style="left:155px;top:13px;color:#202020">|toplevel|Add0~105</div>
<div class="vl" style="left:151px;top:13.00px;height:13px;background:#b0b0b5"></div>
<div class="a" style="left:40px;top:26.00px;width:1135px;height:13px;background:#a3a3a8;border-bottom:1px solid #b4b4b9"></div>
<div class="hl" style="left:0;top:38.50px;width:40px;background:#d8d8d8"></div>
<div class="cell" style="left:43px;top:26px;color:#202020">COUT</div>
<div class="cell" style="left:155px;top:26px;color:#202020">|toplevel|Add0~106</div>
<div class="vl" style="left:151px;top:26.00px;height:13px;background:#b0b0b5"></div>
<div class="a" style="left:40px;top:39.00px;width:1135px;height:13px;background:#a3a3a8;border-bottom:1px solid #b4b4b9"></div>
<div class="hl" style="left:0;top:51.50px;width:40px;background:#d8d8d8"></div>
<div class="cell" style="left:43px;top:39px;color:#202020">SHAREOUT</div>
<div class="cell" style="left:155px;top:39px;color:#202020">|toplevel|Add0~107</div>
<div class="vl" style="left:151px;top:39.00px;height:13px;background:#b0b0b5"></div>
<div class="a" style="left:40px;top:52.00px;width:1135px;height:13px;background:#a3a3a8;border-bottom:1px solid #b4b4b9"></div>
<div class="hl" style="left:0;top:64.50px;width:40px;background:#d8d8d8"></div>
<div class="cell" style="left:43px;top:52px;color:#202020">COMBOUT</div>
<div class="cell" style="left:155px;top:52px;color:#202020">|toplevel|Add0~104</div>
<div class="vl" style="left:151px;top:52.00px;height:13px;background:#b0b0b5"></div>
<div class="a" style="left:20px;top:65.00px;width:1155px;height:13px;background:#a3a3a8;border-bottom:1px solid #b4b4b9"></div>
<div class="hl" style="left:0;top:77.50px;width:20px;background:#d8d8d8"></div>
<svg class="a" style="left:8px;top:68.00px" width="10" height="9"><path d="M0.8,0.8H9.2L5,8Z" fill="#6a6a6a" stroke="#2a2a2a" stroke-width="1.2" stroke-linejoin="round"/></svg>
<div class="cell" style="left:23px;top:65px;color:#202020">Bottom Combinational</div>
<div class="vl" style="left:151px;top:65.00px;height:13px;background:#b0b0b5"></div>
<div class="a" style="left:40px;top:78.00px;width:1135px;height:13px;background:#a3a3a8;border-bottom:1px solid #b4b4b9"></div>
<div class="hl" style="left:0;top:90.50px;width:40px;background:#d8d8d8"></div>
<div class="cell" style="left:43px;top:78px;color:#202020">SUM_OUT</div>
<div class="cell" style="left:155px;top:78px;color:#202020">|toplevel|Add0~101</div>
<div class="vl" style="left:151px;top:78.00px;height:13px;background:#b0b0b5"></div>
<div class="a" style="left:40px;top:91.00px;width:1135px;height:13px;background:#a3a3a8;border-bottom:1px solid #b4b4b9"></div>
<div class="hl" style="left:0;top:103.50px;width:40px;background:#d8d8d8"></div>
<div class="cell" style="left:43px;top:91px;color:#202020">COUT</div>
<div class="cell" style="left:155px;top:91px;color:#202020">|toplevel|Add0~102</div>
<div class="vl" style="left:151px;top:91.00px;height:13px;background:#b0b0b5"></div>
<div class="a" style="left:40px;top:104.00px;width:1135px;height:13px;background:#a3a3a8;border-bottom:1px solid #b4b4b9"></div>
<div class="hl" style="left:0;top:116.50px;width:40px;background:#d8d8d8"></div>
<div class="cell" style="left:43px;top:104px;color:#202020">SHAREOUT</div>
<div class="cell" style="left:155px;top:104px;color:#202020">|toplevel|Add0~103</div>
<div class="vl" style="left:151px;top:104.00px;height:13px;background:#b0b0b5"></div>
<div class="a" style="left:40px;top:117.00px;width:1135px;height:13px;background:#a3a3a8;border-bottom:1px solid #b4b4b9"></div>
<div class="hl" style="left:0;top:129.50px;width:40px;background:#d8d8d8"></div>
<div class="cell" style="left:43px;top:117px;color:#202020">COMBOUT</div>
<div class="cell" style="left:155px;top:117px;color:#202020">|toplevel|Add0~100</div>
<div class="vl" style="left:151px;top:117.00px;height:13px;background:#b0b0b5"></div>
<div class="a" style="left:20px;top:130.00px;width:1155px;height:13px;background:#a3a3a8;border-bottom:1px solid #b4b4b9"></div>
<div class="hl" style="left:0;top:142.50px;width:20px;background:#d8d8d8"></div>
<svg class="a" style="left:8px;top:133.00px" width="10" height="9"><path d="M0.8,0.8H9.2L5,8Z" fill="#6a6a6a" stroke="#2a2a2a" stroke-width="1.2" stroke-linejoin="round"/></svg>
<div class="cell" style="left:23px;top:130px;color:#202020">Top Register</div>
<div class="vl" style="left:151px;top:130.00px;height:13px;background:#b0b0b5"></div>
<div class="a" style="left:40px;top:143.00px;width:1135px;height:13px;background:#a3a3a8;border-bottom:1px solid #b4b4b9"></div>
<div class="hl" style="left:0;top:155.50px;width:40px;background:#d8d8d8"></div>
<div class="cell" style="left:43px;top:143px;color:#202020">REGOUT</div>
<div class="cell" style="left:155px;top:143px;color:#202020">&lt;Disconnected&gt;</div>
<div class="vl" style="left:151px;top:143.00px;height:13px;background:#b0b0b5"></div>
<div class="a" style="left:20px;top:156.00px;width:1155px;height:14px;background:#a3a3a8;border-bottom:1px solid #b4b4b9"></div>
<div class="hl" style="left:0;top:168.50px;width:20px;background:#d8d8d8"></div>
<svg class="a" style="left:8px;top:159.00px" width="10" height="9"><path d="M0.8,0.8H9.2L5,8Z" fill="#6a6a6a" stroke="#2a2a2a" stroke-width="1.2" stroke-linejoin="round"/></svg>
<div class="cell" style="left:23px;top:156px;color:#202020">Top 2 Register</div>
<div class="vl" style="left:151px;top:156.00px;height:13px;background:#b0b0b5"></div>
<div class="a" style="left:40px;top:170.00px;width:1135px;height:13px;background:#a3a3a8;border-bottom:1px solid #b4b4b9"></div>
<div class="hl" style="left:0;top:182.50px;width:40px;background:#d8d8d8"></div>
<div class="cell" style="left:43px;top:170px;color:#202020">REGOUT</div>
<div class="cell" style="left:155px;top:170px;color:#202020">|toplevel|count[1]</div>
<div class="vl" style="left:151px;top:170.00px;height:13px;background:#b0b0b5"></div>
<div class="a" style="left:20px;top:183.00px;width:1155px;height:13px;background:#a3a3a8;border-bottom:1px solid #b4b4b9"></div>
<div class="hl" style="left:0;top:195.50px;width:20px;background:#d8d8d8"></div>
<svg class="a" style="left:8px;top:186.00px" width="10" height="9"><path d="M0.8,0.8H9.2L5,8Z" fill="#6a6a6a" stroke="#2a2a2a" stroke-width="1.2" stroke-linejoin="round"/></svg>
<div class="cell" style="left:23px;top:183px;color:#202020">Bottom Register</div>
<div class="vl" style="left:151px;top:183.00px;height:13px;background:#b0b0b5"></div>
<div class="a" style="left:40px;top:196.00px;width:1135px;height:13px;background:#a3a3a8;border-bottom:1px solid #b4b4b9"></div>
<div class="hl" style="left:0;top:208.50px;width:40px;background:#d8d8d8"></div>
<div class="cell" style="left:43px;top:196px;color:#202020">REGOUT</div>
<div class="cell" style="left:155px;top:196px;color:#202020">&lt;Disconnected&gt;</div>
<div class="vl" style="left:151px;top:196.00px;height:13px;background:#b0b0b5"></div>
<div class="a" style="left:20px;top:209.00px;width:1155px;height:13px;background:#a3a3a8;border-bottom:1px solid #b4b4b9"></div>
<div class="hl" style="left:0;top:221.50px;width:20px;background:#d8d8d8"></div>
<svg class="a" style="left:8px;top:212.00px" width="10" height="9"><path d="M0.8,0.8H9.2L5,8Z" fill="#6a6a6a" stroke="#2a2a2a" stroke-width="1.2" stroke-linejoin="round"/></svg>
<div class="cell" style="left:23px;top:209px;color:#202020">Bottom 2 Register</div>
<div class="vl" style="left:151px;top:209.00px;height:13px;background:#b0b0b5"></div>
<div class="a" style="left:40px;top:222.00px;width:1135px;height:13px;background:#a3a3a8;border-bottom:1px solid #b4b4b9"></div>
<div class="hl" style="left:0;top:234.50px;width:40px;background:#d8d8d8"></div>
<div class="cell" style="left:43px;top:222px;color:#202020">REGOUT</div>
<div class="cell" style="left:155px;top:222px;color:#202020">|toplevel|count[2]</div>
<div class="vl" style="left:151px;top:222.00px;height:13px;background:#b0b0b5"></div>
</div>
<div class="a" style="left:1px;top:1632px;width:2416px;height:24px;background:#cfcfcf;border-top:1px solid #c0c0c0"></div>
</body></html>
